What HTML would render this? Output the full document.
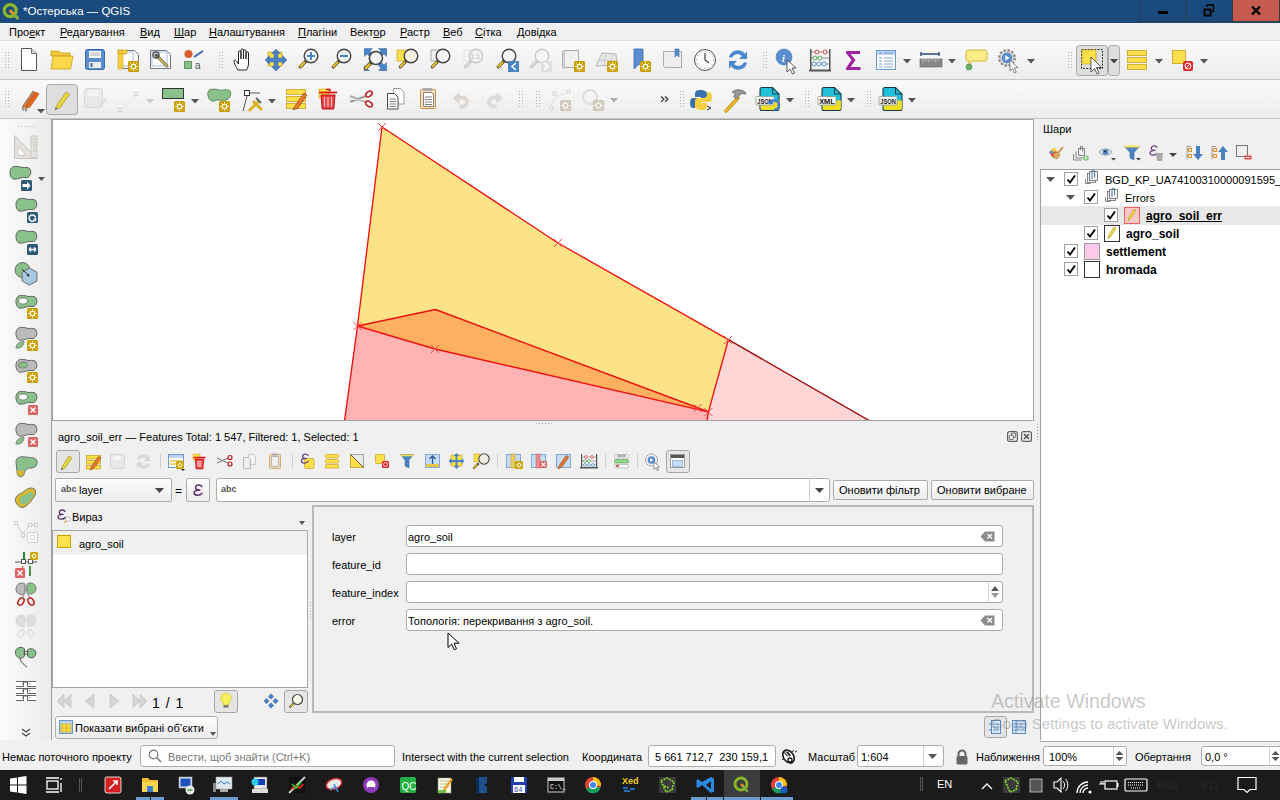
<!DOCTYPE html>
<html><head><meta charset="utf-8">
<style>
*{box-sizing:border-box}
html,body{margin:0;padding:0}
body{width:1280px;height:800px;overflow:hidden;position:relative;background:#f0f0f0;font-family:"Liberation Sans",sans-serif;font-size:11px;color:#000;line-height:1}
.a{position:absolute}
.t{position:absolute;white-space:nowrap;line-height:1}
svg{position:absolute;overflow:visible}
#title{left:0;top:0;width:1280px;height:23px;background:#1b4a7e;color:#fff}
#menu{left:0;top:23px;width:1280px;height:18px;background:#f0f0f0;border-bottom:1px solid #dcdcdc}
.tb{left:0;width:1280px;height:39px;background:linear-gradient(#fafafa,#ececec);border-bottom:1px solid #c8c8c8}
#lefttb{left:0;top:119px;width:52px;height:621px;background:#f0f0f0;border-right:1px solid #a8a8a8}
#map{left:52px;top:119px;width:982px;height:302px;background:#fff;border:1px solid #a0a0a0;overflow:hidden}
#map svg{overflow:hidden}
#dock{left:52px;top:421px;width:983px;height:319px;background:#f0f0f0}
#layers{left:1035px;top:119px;width:245px;height:621px;background:#f0f0f0}
#status{left:0;top:740px;width:1280px;height:30px;background:#f0f0f0}
#taskbar{left:0;top:770px;width:1280px;height:30px;background:#1b1b1b}
.field{position:absolute;background:#fff;border:1px solid #adadad;border-radius:2px}
.btn{position:absolute;background:linear-gradient(#fdfdfd,#ececec);border:1px solid #adadad;border-radius:2px}
.chk{position:absolute;background:#e5e5e5;border:1px solid #a8a8a8;border-radius:3px}
.cb{position:absolute;width:14px;height:14px;background:#fff;border:1px solid #a0a0a0}
.u{text-decoration:underline}
</style></head><body>
<div id="title" class="a">
<svg width="18" height="18" style="left:2px;top:2px" viewBox="0 0 18 18"><circle cx="8.2" cy="8.6" r="6" fill="none" stroke="#8bb92a" stroke-width="3.2"/><path d="M9,9.5L15.5,16" stroke="#7cb342" stroke-width="3.2" stroke-linecap="round"/><path d="M8.5,9L11,11.5" stroke="#f08a2a" stroke-width="2.6" stroke-linecap="round"/></svg>
<div class="t" style="left:23px;top:6px;font-size:11.5px;color:#fff">*Остерська — QGIS</div>
<div class="a" style="left:1139px;top:0;width:47px;height:22px;border-left:1px solid #2e3a48;border-bottom:1px solid #2e3a48"></div>
<div class="a" style="left:1186px;top:0;width:46px;height:22px;border-left:1px solid #2e3a48;border-bottom:1px solid #2e3a48"></div>
<div class="a" style="left:1232px;top:0;width:48px;height:22px;background:#c55a4f;border-left:1px solid #3a3a3a;border-bottom:1px solid #3a3a3a;border-right:1px solid #3a3a3a"></div>
<div class="a" style="left:1158px;top:11px;width:10px;height:3px;background:#000"></div>
<svg width="12" height="12" style="left:1203px;top:4px" viewBox="0 0 12 12"><path d="M1.5,5.5h6v6h-6z" fill="none" stroke="#000" stroke-width="2"/><path d="M4,3V1h6.5v6.5H8.5" fill="none" stroke="#000" stroke-width="1.4"/></svg>
<svg width="12" height="12" style="left:1250px;top:4px" viewBox="0 0 12 12"><path d="M2,2.5L10,10.5M10,2.5L2,10.5" stroke="#000" stroke-width="2.4"/></svg>
</div>
<div id="menu" class="a">
<div class="t" style="left:9px;top:4px">Про<span class="u">е</span>кт</div>
<div class="t" style="left:60px;top:4px"><span class="u">Р</span>едагування</div>
<div class="t" style="left:140px;top:4px"><span class="u">В</span>ид</div>
<div class="t" style="left:174px;top:4px"><span class="u">Ш</span>ар</div>
<div class="t" style="left:209px;top:4px"><span class="u">Н</span>алаштування</div>
<div class="t" style="left:298px;top:4px"><span class="u">П</span>лагіни</div>
<div class="t" style="left:350px;top:4px">Вект<span class="u">о</span>р</div>
<div class="t" style="left:400px;top:4px"><span class="u">Р</span>астр</div>
<div class="t" style="left:443px;top:4px"><span class="u">В</span>еб</div>
<div class="t" style="left:475px;top:4px"><span class="u">С</span>ітка</div>
<div class="t" style="left:517px;top:4px"><span class="u">Д</span>овідка</div>
</div>
<div id="tb1" class="a tb" style="top:41px"></div>
<div id="tb2" class="a tb" style="top:80px"></div>
<svg width="1280" height="78" style="left:0;top:41px" viewBox="0 41 1280 78"><rect x="5" y="52" width="1" height="1" fill="#b0b0b0"/><rect x="8" y="52" width="1" height="1" fill="#b0b0b0"/><rect x="5" y="55" width="1" height="1" fill="#b0b0b0"/><rect x="8" y="55" width="1" height="1" fill="#b0b0b0"/><rect x="5" y="58" width="1" height="1" fill="#b0b0b0"/><rect x="8" y="58" width="1" height="1" fill="#b0b0b0"/><rect x="5" y="61" width="1" height="1" fill="#b0b0b0"/><rect x="8" y="61" width="1" height="1" fill="#b0b0b0"/><rect x="5" y="64" width="1" height="1" fill="#b0b0b0"/><rect x="8" y="64" width="1" height="1" fill="#b0b0b0"/><rect x="5" y="67" width="1" height="1" fill="#b0b0b0"/><rect x="8" y="67" width="1" height="1" fill="#b0b0b0"/>
<path d="M21.5,48.5h10l5,5v17h-15z" fill="#fff" stroke="#555" stroke-width="1"/><path d="M31.5,48.5v5h5" fill="#ddd" stroke="#555" stroke-width="0.8"/>
<path d="M51,51h8l2,2h9v3h-19z" fill="#f0c838" stroke="#c8a020" stroke-width="0.8"/><path d="M53,56h20l-2.5,13h-19.5z" fill="#fcd84a" stroke="#c8a020" stroke-width="0.8"/>
<rect x="85.5" y="49.5" width="19" height="20" rx="2" fill="#5a8ed0" stroke="#3a6aa8"/><rect x="89" y="51" width="12" height="7" fill="#fff"/><path d="M90,53h10M90,55h10" stroke="#888" stroke-width="0.7"/><rect x="89" y="62" width="12" height="6" fill="#eee"/><rect x="90.5" y="63" width="2" height="4" fill="#3a6aa8"/>
<path d="M118.5,50.5h16l4,4v14h-20z" fill="#fff" stroke="#666" stroke-width="0.9"/><rect x="120" y="52" width="13" height="14" fill="none" stroke="#8ab0e0" stroke-width="0.8"/><path d="M118,50h5v19h-5z M118,50h9v4h-9z" fill="#f4d040" stroke="#c8a020" stroke-width="0.6"/><rect x="128" y="61" width="11" height="11" rx="1.5" fill="#c9a000"/><circle cx="133.5" cy="66.5" r="2.20" fill="none" stroke="#fff" stroke-width="1.10"/><path d="M136.36,66.50L137.90,66.50M135.52,68.52L136.61,69.61M133.50,69.36L133.50,70.90M131.48,68.52L130.39,69.61M130.64,66.50L129.10,66.50M131.48,64.48L130.39,63.39M133.50,63.64L133.50,62.10M135.52,64.48L136.61,63.39" stroke="#fff" stroke-width="0.99"/>
<path d="M150.5,50.5h16l4,4v14h-20z" fill="#fff" stroke="#666" stroke-width="0.9"/><rect x="152" y="52" width="15" height="14" fill="none" stroke="#8ab0e0" stroke-width="0.8"/><path d="M156,55l11,11" stroke="#555" stroke-width="3" stroke-linecap="round"/><path d="M158,57l9,9" stroke="#e8c040" stroke-width="1.6" stroke-linecap="round"/><circle cx="156" cy="55" r="3" fill="none" stroke="#555" stroke-width="1.5"/>
<circle cx="188.5" cy="54" r="4" fill="#d86030"/><path d="M194,57l9,-6" stroke="#3a6ab8" stroke-width="2"/><rect x="184.5" y="61.5" width="7" height="7" fill="#8ac08a" stroke="#4a8a4a" stroke-width="0.8"/><text x="195" y="69" font-size="10" fill="#555" font-family="Liberation Sans">a</text>
<rect x="219" y="52" width="1" height="1" fill="#b0b0b0"/><rect x="222" y="52" width="1" height="1" fill="#b0b0b0"/><rect x="219" y="55" width="1" height="1" fill="#b0b0b0"/><rect x="222" y="55" width="1" height="1" fill="#b0b0b0"/><rect x="219" y="58" width="1" height="1" fill="#b0b0b0"/><rect x="222" y="58" width="1" height="1" fill="#b0b0b0"/><rect x="219" y="61" width="1" height="1" fill="#b0b0b0"/><rect x="222" y="61" width="1" height="1" fill="#b0b0b0"/><rect x="219" y="64" width="1" height="1" fill="#b0b0b0"/><rect x="222" y="64" width="1" height="1" fill="#b0b0b0"/><rect x="219" y="67" width="1" height="1" fill="#b0b0b0"/><rect x="222" y="67" width="1" height="1" fill="#b0b0b0"/>
<path d="M238,70c-2,-3 -4,-7 -4,-9c0,-1 1.5,-1.5 2.5,0l2,3v-12c0,-1.5 2.5,-1.5 2.5,0v7v-9c0,-1.5 2.5,-1.5 2.5,0v9v-8c0,-1.5 2.5,-1.5 2.5,0v8v-6c0,-1.5 2.5,-1.5 2.5,0v10c0,3 -1,5 -2,7z" fill="#fff" stroke="#222" stroke-width="1"/>
<rect x="268" y="52" width="14" height="14" fill="#fce04a" stroke="#c8a020" stroke-width="0.7"/><g fill="#4a84c4" stroke="#3a6aa4" stroke-width="0.5"><path d="M276,49l4.5,4.5h-9z M276,71l4.5,-4.5h-9z M265,60l4.5,4.5v-9z M287,60l-4.5,4.5v-9z"/><rect x="274" y="53" width="4" height="14"/><rect x="269" y="58" width="14" height="4"/></g>
<path d="M306.24,60.76l-6,6" stroke="#444" stroke-width="3.2" stroke-linecap="round"/><path d="M304.44,62.559999999999995l-4,4" stroke="#e8c020" stroke-width="2.2" stroke-linecap="round"/><circle cx="311" cy="56" r="6.8" fill="#f4f4f4" stroke="#444" stroke-width="1.4"/><path d="M307,56h8M311,52v8" stroke="#4a84c4" stroke-width="2"/>
<path d="M339.24,60.76l-6,6" stroke="#444" stroke-width="3.2" stroke-linecap="round"/><path d="M337.44,62.559999999999995l-4,4" stroke="#e8c020" stroke-width="2.2" stroke-linecap="round"/><circle cx="344" cy="56" r="6.8" fill="#f4f4f4" stroke="#444" stroke-width="1.4"/><path d="M340,56h8" stroke="#4a84c4" stroke-width="2"/>
<g fill="#4a84c4" stroke="#3a6aa4" stroke-width="0.5"><path d="M364.5,48.5h8l-2.5,2.5 3.5,3.5 -3,3 -3.5,-3.5 -2.5,2.5z M386.5,48.5h-8l2.5,2.5 -3.5,3.5 3,3 3.5,-3.5 2.5,2.5z M386.5,70.5h-8l2.5,-2.5 -3.5,-3.5 3,-3 3.5,3.5 2.5,-2.5z"/></g><path d="M371.16,62.34l-6,6" stroke="#444" stroke-width="3.2" stroke-linecap="round"/><path d="M369.36,64.14l-4,4" stroke="#e8c020" stroke-width="2.2" stroke-linecap="round"/><circle cx="375.5" cy="58" r="6.2" fill="#e8e8e8" stroke="#444" stroke-width="1.4"/>
<g fill="#4a84c4"><path d="M364,49h6l-6,6z M387,49h-6l6,6z M364,71h6l-6,-6z M387,71h-6l6,-6z"/></g><path d="M371.45,62.55l-6,6" stroke="#444" stroke-width="3.2" stroke-linecap="round"/><path d="M369.65,64.35l-4,4" stroke="#e8c020" stroke-width="2.2" stroke-linecap="round"/><circle cx="376" cy="58" r="6.5" fill="#f4f4f4" stroke="#444" stroke-width="1.4"/>
<rect x="397" y="50" width="9" height="11" fill="#fce04a" stroke="#c8a020" stroke-width="0.7"/><path d="M406.24,60.76l-6,6" stroke="#444" stroke-width="3.2" stroke-linecap="round"/><path d="M404.44,62.559999999999995l-4,4" stroke="#e8c020" stroke-width="2.2" stroke-linecap="round"/><circle cx="411" cy="56" r="6.8" fill="#f0eee0" stroke="#444" stroke-width="1.4"/>
<rect x="431" y="50" width="9" height="11" fill="#eee" stroke="#888" stroke-width="0.7"/><path d="M438.24,60.76l-6,6" stroke="#444" stroke-width="3.2" stroke-linecap="round"/><path d="M436.44,62.559999999999995l-4,4" stroke="#e8c020" stroke-width="2.2" stroke-linecap="round"/><circle cx="443" cy="56" r="6.8" fill="#f4f4f4" stroke="#444" stroke-width="1.4"/>
<rect x="464" y="50" width="9" height="11" fill="#f4f4f4" stroke="#ddd" stroke-width="0.7"/><path d="M471.24,60.76l-6,6" stroke="#c8c8c8" stroke-width="3.2" stroke-linecap="round"/><path d="M469.44,62.559999999999995l-4,4" stroke="#d8d8d0" stroke-width="2.2" stroke-linecap="round"/><circle cx="476" cy="56" r="6.8" fill="#f4f4f4" stroke="#c8c8c8" stroke-width="1.4"/><text x="470" y="59" font-size="7" font-weight="bold" fill="#c8c8c8" font-family="Liberation Sans">1:1</text>
<path d="M504.24,60.76l-6,6" stroke="#444" stroke-width="3.2" stroke-linecap="round"/><path d="M502.44,62.559999999999995l-4,4" stroke="#e8c020" stroke-width="2.2" stroke-linecap="round"/><circle cx="509" cy="56" r="6.8" fill="#f4f4f4" stroke="#444" stroke-width="1.4"/><rect x="508" y="61" width="11" height="11" fill="#4a84c4"/><path d="M516,63l-4,3.5 4,3.5" stroke="#fff" stroke-width="1.6" fill="none"/>
<path d="M537.24,60.76l-6,6" stroke="#c8c8c8" stroke-width="3.2" stroke-linecap="round"/><path d="M535.44,62.559999999999995l-4,4" stroke="#d8d8d0" stroke-width="2.2" stroke-linecap="round"/><circle cx="542" cy="56" r="6.8" fill="#f4f4f4" stroke="#c8c8c8" stroke-width="1.4"/><rect x="541" y="61" width="11" height="11" fill="#e0e0e0"/><path d="M544,63l4,3.5 -4,3.5" stroke="#fff" stroke-width="1.6" fill="none"/>
<path d="M564.5,50.5h14v17h-14z" fill="#f0f0f0" stroke="#999" stroke-width="0.8"/><path d="M564.5,50.5c-1,0 -2,1 -2,2v14c0,1 1,2 2,2" fill="#ddd" stroke="#999" stroke-width="0.8"/><rect x="574" y="61" width="11" height="11" rx="1.5" fill="#c9a000"/><circle cx="579.5" cy="66.5" r="2.20" fill="none" stroke="#fff" stroke-width="1.10"/><path d="M582.36,66.50L583.90,66.50M581.52,68.52L582.61,69.61M579.50,69.36L579.50,70.90M577.48,68.52L576.39,69.61M576.64,66.50L575.10,66.50M577.48,64.48L576.39,63.39M579.50,63.64L579.50,62.10M581.52,64.48L582.61,63.39" stroke="#fff" stroke-width="0.99"/>
<path d="M596,66l6,-13 14,1 1,11z" fill="#e8e8e8" stroke="#aaa" stroke-width="0.8"/><path d="M600,60l16,1M606,54l-2,12M612,54l-1,12" stroke="#bbb" stroke-width="0.6"/><rect x="607" y="61" width="11" height="11" rx="1.5" fill="#c9a000"/><circle cx="612.5" cy="66.5" r="2.20" fill="none" stroke="#fff" stroke-width="1.10"/><path d="M615.36,66.50L616.90,66.50M614.52,68.52L615.61,69.61M612.50,69.36L612.50,70.90M610.48,68.52L609.39,69.61M609.64,66.50L608.10,66.50M610.48,64.48L609.39,63.39M612.50,63.64L612.50,62.10M614.52,64.48L615.61,63.39" stroke="#fff" stroke-width="0.99"/>
<path d="M634,49h9v18l-4,-3 -5,5z" fill="#5a8ed0" stroke="#3a6aa8" stroke-width="0.8"/><rect x="640" y="61" width="11" height="11" rx="1.5" fill="#c9a000"/><circle cx="645.5" cy="66.5" r="2.20" fill="none" stroke="#fff" stroke-width="1.10"/><path d="M648.36,66.50L649.90,66.50M647.52,68.52L648.61,69.61M645.50,69.36L645.50,70.90M643.48,68.52L642.39,69.61M642.64,66.50L641.10,66.50M643.48,64.48L642.39,63.39M645.50,63.64L645.50,62.10M647.52,64.48L648.61,63.39" stroke="#fff" stroke-width="0.99"/>
<path d="M663.5,51.5h18v16h-16c-1,0 -2,-1 -2,-2z" fill="#eee" stroke="#999" stroke-width="0.8"/><path d="M675,49h4v8l-2,-2 -2,2z" fill="#5a8ed0" stroke="#3a6aa8" stroke-width="0.6"/>
<circle cx="705" cy="60" r="10.5" fill="#fafafa" stroke="#555" stroke-width="1"/><circle cx="705" cy="60" r="8.5" fill="none" stroke="#4a84c4" stroke-width="0.9" stroke-dasharray="1 3.4"/><path d="M705,53v7l4,3" stroke="#444" stroke-width="1.2" fill="none"/>
<path d="M729,57a9,9 0 0 1 16,-3l2,-3v8h-8l3,-3a6,6 0 0 0 -10,2z" fill="#4a88d0"/><path d="M747,63a9,9 0 0 1 -16,3l-2,3v-8h8l-3,3a6,6 0 0 0 10,-2z" fill="#4a88d0"/>
<rect x="763" y="52" width="1" height="1" fill="#b0b0b0"/><rect x="766" y="52" width="1" height="1" fill="#b0b0b0"/><rect x="763" y="55" width="1" height="1" fill="#b0b0b0"/><rect x="766" y="55" width="1" height="1" fill="#b0b0b0"/><rect x="763" y="58" width="1" height="1" fill="#b0b0b0"/><rect x="766" y="58" width="1" height="1" fill="#b0b0b0"/><rect x="763" y="61" width="1" height="1" fill="#b0b0b0"/><rect x="766" y="61" width="1" height="1" fill="#b0b0b0"/><rect x="763" y="64" width="1" height="1" fill="#b0b0b0"/><rect x="766" y="64" width="1" height="1" fill="#b0b0b0"/><rect x="763" y="67" width="1" height="1" fill="#b0b0b0"/><rect x="766" y="67" width="1" height="1" fill="#b0b0b0"/>
<circle cx="784" cy="57" r="8" fill="#5a8ed0" stroke="#4a7ab8" stroke-width="0.6"/><text x="782" y="62" font-size="10" font-style="italic" font-weight="bold" fill="#fff" font-family="Liberation Serif">i</text><path d="M787,60v12l3,-3 2.5,5 2,-1 -2.5,-5h4z" fill="#fff" stroke="#333" stroke-width="0.8"/>
<rect x="810" y="49" width="1.5" height="22" fill="#555"/><rect x="829" y="49" width="1.5" height="22" fill="#555"/><rect x="809" y="69.5" width="22" height="2" fill="#555"/><path d="M811,52h18M811,58h18M811,64h18" stroke="#777" stroke-width="0.8"/><g stroke-width="0.9"><circle cx="817" cy="52" r="2" fill="#fff" stroke="#d03030"/><circle cx="825" cy="52" r="2" fill="#fff" stroke="#d03030"/><circle cx="815" cy="58" r="2" fill="#fff" stroke="#40a040"/><circle cx="820" cy="58" r="2" fill="#fff" stroke="#40a040"/><circle cx="814" cy="64" r="2" fill="#fff" stroke="#4a84c4"/><circle cx="819" cy="64" r="2" fill="#fff" stroke="#4a84c4"/><circle cx="824" cy="64" r="2" fill="#fff" stroke="#4a84c4"/></g>
<path d="M846,51h14v3h-9.5l5,6 -5,7h10v3h-14.5v-2l5.5,-8 -5.5,-7z" fill="#a020a0"/>
<rect x="876.5" y="50.5" width="19" height="19" fill="#fff" stroke="#6a9ad4"/><rect x="877" y="51" width="18" height="4" fill="#c0d4f0"/><path d="M879,53h3M884,53h9" stroke="#6a9ad4" stroke-width="1"/><path d="M879,58h3M884,58h9M879,61h3M884,61h9M879,64h3M884,64h9M879,67h3M884,67h9" stroke="#6a9ad4" stroke-width="0.9"/>
<path d="M903,59h8l-4,4.5z" fill="#555"/>
<path d="M921,54h18M921,52v4M939,52v4" stroke="#2a4a78" stroke-width="1.4"/><rect x="920" y="59" width="22" height="8" fill="#888" stroke="#666" stroke-width="0.6"/><path d="M923,59v3M926,59v2M929,59v3M932,59v2M935,59v3M938,59v2" stroke="#ddd" stroke-width="0.8"/>
<path d="M948,59h8l-4,4.5z" fill="#555"/>
<path d="M966,52a2,2 0 0 1 2,-2h17a2,2 0 0 1 2,2v7a2,2 0 0 1 -2,2h-13l-3,4 0,-4h-1a2,2 0 0 1 -2,-2z" fill="#fcec8a" stroke="#d0b020" stroke-width="0.9"/><circle cx="969" cy="67" r="3" fill="#6ab06a" stroke="#4a804a" stroke-width="0.6"/>
<circle cx="1007" cy="58" r="7.6" fill="#e4e4e4" stroke="#888" stroke-width="2.6" stroke-dasharray="2.4 1.6"/><circle cx="1007" cy="58" r="6.8" fill="#e8e8e8" stroke="#aaa" stroke-width="0.6"/><circle cx="1007" cy="58" r="5" fill="#5a8ed0" stroke="#3a6aa8" stroke-width="0.6"/><path d="M1005.3,55.3v5.4l4.4,-2.7z" fill="#fff"/><path d="M1010,60v11l2.5,-2.5 2,4.5 1.8,-0.8 -2,-4.5h3.7z" fill="#fff" stroke="#555" stroke-width="0.7"/>
<path d="M1027,59h8l-4,4.5z" fill="#555"/>
<rect x="1068" y="52" width="1" height="1" fill="#b0b0b0"/><rect x="1071" y="52" width="1" height="1" fill="#b0b0b0"/><rect x="1068" y="55" width="1" height="1" fill="#b0b0b0"/><rect x="1071" y="55" width="1" height="1" fill="#b0b0b0"/><rect x="1068" y="58" width="1" height="1" fill="#b0b0b0"/><rect x="1071" y="58" width="1" height="1" fill="#b0b0b0"/><rect x="1068" y="61" width="1" height="1" fill="#b0b0b0"/><rect x="1071" y="61" width="1" height="1" fill="#b0b0b0"/><rect x="1068" y="64" width="1" height="1" fill="#b0b0b0"/><rect x="1071" y="64" width="1" height="1" fill="#b0b0b0"/><rect x="1068" y="67" width="1" height="1" fill="#b0b0b0"/><rect x="1071" y="67" width="1" height="1" fill="#b0b0b0"/>
<rect x="1076.5" y="45.5" width="31" height="30" rx="3" fill="#dedede" stroke="#a8a8a8"/><rect x="1108.5" y="45.5" width="11" height="30" rx="3" fill="#dedede" stroke="#a8a8a8"/>
<rect x="1081.5" y="49.5" width="21" height="19" fill="none" stroke="#222" stroke-dasharray="1.8 1.4"/><rect x="1082" y="50" width="14" height="14" fill="#fce04a" stroke="#c8a020" stroke-width="0.7"/><path d="M1091,57v15l3.5,-3.5 2.5,5.5 2,-1 -2.5,-5.5h5z" fill="#fff" stroke="#333" stroke-width="0.8"/>
<path d="M1110,59h8l-4,4.5z" fill="#444"/>
<g fill="#fce04a" stroke="#c8a020" stroke-width="0.8"><rect x="1127.5" y="50.5" width="19" height="5"/><rect x="1127.5" y="57.5" width="19" height="5"/><rect x="1127.5" y="64.5" width="19" height="5"/></g>
<path d="M1155,59h8l-4,4.5z" fill="#555"/>
<rect x="1172.5" y="50.5" width="13" height="13" fill="#fce04a" stroke="#c8a020" stroke-width="0.8"/><rect x="1183" y="61" width="10" height="10" rx="2" fill="#e02828"/><circle cx="1188" cy="66" r="3" fill="none" stroke="#fff" stroke-width="1"/><path d="M1186,68l4,-4" stroke="#fff" stroke-width="1"/>
<path d="M1200,59h8l-4,4.5z" fill="#555"/>
<rect x="5" y="91" width="1" height="1" fill="#b0b0b0"/><rect x="8" y="91" width="1" height="1" fill="#b0b0b0"/><rect x="5" y="94" width="1" height="1" fill="#b0b0b0"/><rect x="8" y="94" width="1" height="1" fill="#b0b0b0"/><rect x="5" y="97" width="1" height="1" fill="#b0b0b0"/><rect x="8" y="97" width="1" height="1" fill="#b0b0b0"/><rect x="5" y="100" width="1" height="1" fill="#b0b0b0"/><rect x="8" y="100" width="1" height="1" fill="#b0b0b0"/><rect x="5" y="103" width="1" height="1" fill="#b0b0b0"/><rect x="8" y="103" width="1" height="1" fill="#b0b0b0"/><rect x="5" y="106" width="1" height="1" fill="#b0b0b0"/><rect x="8" y="106" width="1" height="1" fill="#b0b0b0"/>
<path d="M22,108l2,-4 9,-13 3,2 -9,13z" fill="#c87a4a" stroke="#8a5030" stroke-width="0.6"/><path d="M25,109l2,-4 9,-13 3,2 -9,13z" fill="#e86a20" stroke="#a04a10" stroke-width="0.6"/><path d="M22,108l1,3 2,-2z M25,109l0.5,3 2,-2z" fill="#777"/>
<path d="M37,109h8l-4,4.5z" fill="#555"/>
<rect x="46.5" y="84.5" width="31" height="30" rx="3" fill="#dedede" stroke="#a8a8a8"/><path d="M55,110l2,-5 9,-13 3.5,2.2 -9,13z" fill="#e8d840" stroke="#a89020" stroke-width="0.7"/><path d="M55,110l0.5,-3 2.5,1.6z" fill="#777"/>
<rect x="84.5" y="88.5" width="18" height="19" rx="2" fill="#e8e8e8" stroke="#d8d8d8"/><rect x="88" y="90" width="11" height="6" fill="#f4f4f4"/><path d="M97,110l2,-4 6,-8 2,1.5 -6,8z" fill="#e0e0e0"/>
<path d="M120,111l16,-16" stroke="#d8d8d8" stroke-width="1" stroke-dasharray="2 2"/><rect x="118.5" y="108.5" width="3" height="3" fill="#fff" stroke="#d0d0d0"/><rect x="134.5" y="92.5" width="3" height="3" fill="#fff" stroke="#d0d0d0"/>
<path d="M146,99h8l-4,4.5z" fill="#c8c8c8"/>
<rect x="162.5" y="88.5" width="21" height="10" fill="#8ac08a" stroke="#333" stroke-width="1"/><rect x="174" y="101" width="11" height="11" rx="1.5" fill="#c9a000"/><circle cx="179.5" cy="106.5" r="2.20" fill="none" stroke="#fff" stroke-width="1.10"/><path d="M182.36,106.50L183.90,106.50M181.52,108.52L182.61,109.61M179.50,109.36L179.50,110.90M177.48,108.52L176.39,109.61M176.64,106.50L175.10,106.50M177.48,104.48L176.39,103.39M179.50,103.64L179.50,102.10M181.52,104.48L182.61,103.39" stroke="#fff" stroke-width="0.99"/>
<path d="M191,99h8l-4,4.5z" fill="#555"/>
<path d="M208,92c1,-4 8,-3 11,-2c3,1 9,-2 11,1c2,3 0,8 -4,9c-5,1 -8,-1 -12,1c-4,1 -7,-4 -6,-9z" fill="#8ac08a" stroke="#4a7a4a" stroke-width="0.8"/><rect x="219" y="101" width="11" height="11" rx="1.5" fill="#c9a000"/><circle cx="224.5" cy="106.5" r="2.20" fill="none" stroke="#fff" stroke-width="1.10"/><path d="M227.36,106.50L228.90,106.50M226.52,108.52L227.61,109.61M224.50,109.36L224.50,110.90M222.48,108.52L221.39,109.61M221.64,106.50L220.10,106.50M222.48,104.48L221.39,103.39M224.50,103.64L224.50,102.10M226.52,104.48L227.61,103.39" stroke="#fff" stroke-width="0.99"/>
<rect x="244.5" y="90.5" width="5" height="5" fill="#fff" stroke="#333"/><path d="M250,93h10M247,96l-4,15" stroke="#555" stroke-width="1"/><path d="M249,111l10,-10M253,101l9,9" stroke="#d8b020" stroke-width="2.8"/><path d="M256,98l5,5" stroke="#666" stroke-width="2"/>
<path d="M268,99h8l-4,4.5z" fill="#555"/>
<g fill="#fce04a" stroke="#c8a020" stroke-width="0.8"><rect x="286.5" y="89.5" width="19" height="5"/><rect x="286.5" y="96.5" width="19" height="5"/><rect x="286.5" y="103.5" width="19" height="5"/></g><path d="M293,110l2,-4 9,-13 3,2 -9,13z" fill="#e87830" stroke="#8a4010" stroke-width="0.7"/>
<rect x="319" y="89" width="10" height="9" fill="#fce04a" stroke="#c8a020" stroke-width="0.6"/><path d="M326,89.5h4v2" stroke="#d81818" stroke-width="1.4" fill="none"/><path d="M319,92.5h18" stroke="#d81818" stroke-width="1.8"/><path d="M321,95h14l-1.2,14h-11.6z" fill="#e84040" stroke="#c01010" stroke-width="1"/><path d="M324.5,97v10M328,97v10M331.5,97v10" stroke="#fbb" stroke-width="1.3"/>
<path d="M351,96.5l14,5M351,101.5l14,-5" stroke="#999" stroke-width="2" stroke-linecap="round"/><path d="M351,96.5l14,5" stroke="#ddd" stroke-width="0.7"/><ellipse cx="369" cy="94" rx="3.6" ry="2.4" transform="rotate(-35 369 94)" fill="none" stroke="#b82020" stroke-width="1.5"/><ellipse cx="369" cy="104" rx="3.6" ry="2.4" transform="rotate(35 369 104)" fill="none" stroke="#b82020" stroke-width="1.5"/>
<path d="M393.5,88.5h7l3.5,3.5v12h-10.5z" fill="#fff" stroke="#888" stroke-width="0.8"/><path d="M387.5,93.5h7l3.5,3.5v12h-10.5z" fill="#fff" stroke="#333" stroke-width="0.9"/><path d="M389.5,99h6.5M389.5,101.5h6.5M389.5,104h6.5M389.5,106.5h6.5" stroke="#444" stroke-width="0.7"/>
<rect x="420.5" y="89.5" width="15" height="19" rx="1" fill="#f4e0c0" stroke="#c89040" stroke-width="1"/><rect x="423" y="88" width="9" height="3" fill="#aaa"/><path d="M423.5,92.5h8l2,2v12h-10z" fill="#fff" stroke="#555" stroke-width="0.7"/><path d="M425,97h7M425,99.5h7M425,102h7M425,104.5h7" stroke="#444" stroke-width="0.7"/>
<path d="M453,98l6.5,-6v3.5h3a6.5,6.5 0 0 1 0,13h-3v-4h3a2.5,2.5 0 0 0 0,-5h-3v4.5z" fill="#dcd6d2"/>
<path d="M503,98l-6.5,-6v3.5h-3a6.5,6.5 0 0 0 0,13h3v-4h-3a2.5,2.5 0 0 1 0,-5h3v4.5z" fill="#d8dcd8"/>
<rect x="519" y="91" width="1" height="1" fill="#b0b0b0"/><rect x="522" y="91" width="1" height="1" fill="#b0b0b0"/><rect x="519" y="94" width="1" height="1" fill="#b0b0b0"/><rect x="522" y="94" width="1" height="1" fill="#b0b0b0"/><rect x="519" y="97" width="1" height="1" fill="#b0b0b0"/><rect x="522" y="97" width="1" height="1" fill="#b0b0b0"/><rect x="519" y="100" width="1" height="1" fill="#b0b0b0"/><rect x="522" y="100" width="1" height="1" fill="#b0b0b0"/><rect x="519" y="103" width="1" height="1" fill="#b0b0b0"/><rect x="522" y="103" width="1" height="1" fill="#b0b0b0"/><rect x="519" y="106" width="1" height="1" fill="#b0b0b0"/><rect x="522" y="106" width="1" height="1" fill="#b0b0b0"/>
<rect x="536" y="91" width="1" height="1" fill="#b0b0b0"/><rect x="539" y="91" width="1" height="1" fill="#b0b0b0"/><rect x="536" y="94" width="1" height="1" fill="#b0b0b0"/><rect x="539" y="94" width="1" height="1" fill="#b0b0b0"/><rect x="536" y="97" width="1" height="1" fill="#b0b0b0"/><rect x="539" y="97" width="1" height="1" fill="#b0b0b0"/><rect x="536" y="100" width="1" height="1" fill="#b0b0b0"/><rect x="539" y="100" width="1" height="1" fill="#b0b0b0"/><rect x="536" y="103" width="1" height="1" fill="#b0b0b0"/><rect x="539" y="103" width="1" height="1" fill="#b0b0b0"/><rect x="536" y="106" width="1" height="1" fill="#b0b0b0"/><rect x="539" y="106" width="1" height="1" fill="#b0b0b0"/>
<path d="M551,110c0,-9 5,-16 14,-16" stroke="#ddd" stroke-width="1" fill="none"/><rect x="550" y="107" width="3" height="3" fill="#fff" stroke="#d0d0d0"/><rect x="553" y="92" width="3" height="3" fill="#fff" stroke="#d0d0d0"/><rect x="567" y="90" width="3" height="3" fill="#fff" stroke="#d0d0d0"/><rect x="560" y="100" width="11" height="11" rx="1.5" fill="#cfc8b8"/><circle cx="565.5" cy="105.5" r="2.20" fill="none" stroke="#fff" stroke-width="1.10"/><path d="M568.36,105.50L569.90,105.50M567.52,107.52L568.61,108.61M565.50,108.36L565.50,109.90M563.48,107.52L562.39,108.61M562.64,105.50L561.10,105.50M563.48,103.48L562.39,102.39M565.50,102.64L565.50,101.10M567.52,103.48L568.61,102.39" stroke="#fff" stroke-width="0.99"/>
<circle cx="590" cy="97" r="7" fill="none" stroke="#ddd" stroke-width="2"/><rect x="593" y="100" width="11" height="11" rx="1.5" fill="#cfc8b8"/><circle cx="598.5" cy="105.5" r="2.20" fill="none" stroke="#fff" stroke-width="1.10"/><path d="M601.36,105.50L602.90,105.50M600.52,107.52L601.61,108.61M598.50,108.36L598.50,109.90M596.48,107.52L595.39,108.61M595.64,105.50L594.10,105.50M596.48,103.48L595.39,102.39M598.50,102.64L598.50,101.10M600.52,103.48L601.61,102.39" stroke="#fff" stroke-width="0.99"/>
<path d="M610,98h8l-4,4.5z" fill="#aaa"/>
<path d="M661,96.5l3,2.7 -3,2.7M665,96.5l3,2.7 -3,2.7" stroke="#333" stroke-width="1.2" fill="none"/>
<rect x="680" y="91" width="1" height="1" fill="#b0b0b0"/><rect x="683" y="91" width="1" height="1" fill="#b0b0b0"/><rect x="680" y="94" width="1" height="1" fill="#b0b0b0"/><rect x="683" y="94" width="1" height="1" fill="#b0b0b0"/><rect x="680" y="97" width="1" height="1" fill="#b0b0b0"/><rect x="683" y="97" width="1" height="1" fill="#b0b0b0"/><rect x="680" y="100" width="1" height="1" fill="#b0b0b0"/><rect x="683" y="100" width="1" height="1" fill="#b0b0b0"/><rect x="680" y="103" width="1" height="1" fill="#b0b0b0"/><rect x="683" y="103" width="1" height="1" fill="#b0b0b0"/><rect x="680" y="106" width="1" height="1" fill="#b0b0b0"/><rect x="683" y="106" width="1" height="1" fill="#b0b0b0"/>
<path d="M700,90c-4,0 -5,2 -5,4v3h6v1h-8c-2,0 -3,2 -3,5s1,5 3,5h2v-3c0,-2 2,-3 4,-3h5c2,0 3,-1 3,-3v-5c0,-2 -2,-4 -7,-4z" fill="#3a72b0"/><path d="M702,110c4,0 5,-2 5,-4v-3h-6v-1h8c2,0 3,-2 3,-5s-1,-5 -3,-5h-2v3c0,2 -2,3 -4,3h-5c-2,0 -3,1 -3,3v5c0,2 2,4 7,4z" fill="#f4d040"/><path d="M707,106l4,2 -4,2" stroke="#333" stroke-width="1" fill="none"/>
<path d="M726,111l12,-13" stroke="#c89010" stroke-width="3.4" stroke-linecap="round"/><path d="M726,111l12,-13" stroke="#f0c030" stroke-width="1.8" stroke-linecap="round"/><path d="M732,92c4,-3 9,-3 13,0l1,2 -4,-0.5 -2,1 -3.5,4.5 -3,-2.5 2,-3z" fill="#999" stroke="#555" stroke-width="0.7"/>
<path d="M762,87.5h10.5l6.5,6.5v14.5a2,2 0 0 1 -2,2h-15a2,2 0 0 1 -2,-2v-19a2,2 0 0 1 2,-2z" fill="#22c0d8" stroke="#173c48" stroke-width="1.1"/><path d="M760.6,100.5h18.3v8a1.5,1.5 0 0 1 -1.5,1.5h-15.3a1.5,1.5 0 0 1 -1.5,-1.5z" fill="#f0dc20"/><path d="M772.5,87.5v6.5h6.5" fill="none" stroke="#173c48" stroke-width="1"/><rect x="756" y="96.5" width="18" height="8.5" rx="1" fill="#f8f8f8" stroke="#8a9a9a" stroke-width="0.8"/><text x="757.2" y="103.8" font-size="7.6" font-weight="bold" fill="#111" font-family="Liberation Sans" textLength="15.6" lengthAdjust="spacingAndGlyphs">JSON</text><path d="M770,104a4.5,4.5 0 1 1 4,5.5" stroke="#3a7ad8" stroke-width="2.2" fill="none"/><path d="M767,102l3,3 1,-4z" fill="#3a7ad8"/>
<path d="M786,98h8l-4,4.5z" fill="#555"/>
<rect x="805" y="91" width="1" height="1" fill="#b0b0b0"/><rect x="808" y="91" width="1" height="1" fill="#b0b0b0"/><rect x="805" y="94" width="1" height="1" fill="#b0b0b0"/><rect x="808" y="94" width="1" height="1" fill="#b0b0b0"/><rect x="805" y="97" width="1" height="1" fill="#b0b0b0"/><rect x="808" y="97" width="1" height="1" fill="#b0b0b0"/><rect x="805" y="100" width="1" height="1" fill="#b0b0b0"/><rect x="808" y="100" width="1" height="1" fill="#b0b0b0"/><rect x="805" y="103" width="1" height="1" fill="#b0b0b0"/><rect x="808" y="103" width="1" height="1" fill="#b0b0b0"/><rect x="805" y="106" width="1" height="1" fill="#b0b0b0"/><rect x="808" y="106" width="1" height="1" fill="#b0b0b0"/>
<path d="M824,87.5h10.5l6.5,6.5v14.5a2,2 0 0 1 -2,2h-15a2,2 0 0 1 -2,-2v-19a2,2 0 0 1 2,-2z" fill="#22c0d8" stroke="#173c48" stroke-width="1.1"/><path d="M822.6,100.5h18.3v8a1.5,1.5 0 0 1 -1.5,1.5h-15.3a1.5,1.5 0 0 1 -1.5,-1.5z" fill="#f0dc20"/><path d="M834.5,87.5v6.5h6.5" fill="none" stroke="#173c48" stroke-width="1"/><rect x="818" y="96.5" width="18" height="8.5" rx="1" fill="#f8f8f8" stroke="#8a9a9a" stroke-width="0.8"/><text x="819.2" y="103.8" font-size="7.6" font-weight="bold" fill="#111" font-family="Liberation Sans" textLength="15.6" lengthAdjust="spacingAndGlyphs">XML</text>
<path d="M847,98h8l-4,4.5z" fill="#555"/>
<rect x="867" y="91" width="1" height="1" fill="#b0b0b0"/><rect x="870" y="91" width="1" height="1" fill="#b0b0b0"/><rect x="867" y="94" width="1" height="1" fill="#b0b0b0"/><rect x="870" y="94" width="1" height="1" fill="#b0b0b0"/><rect x="867" y="97" width="1" height="1" fill="#b0b0b0"/><rect x="870" y="97" width="1" height="1" fill="#b0b0b0"/><rect x="867" y="100" width="1" height="1" fill="#b0b0b0"/><rect x="870" y="100" width="1" height="1" fill="#b0b0b0"/><rect x="867" y="103" width="1" height="1" fill="#b0b0b0"/><rect x="870" y="103" width="1" height="1" fill="#b0b0b0"/><rect x="867" y="106" width="1" height="1" fill="#b0b0b0"/><rect x="870" y="106" width="1" height="1" fill="#b0b0b0"/>
<path d="M885,87.5h10.5l6.5,6.5v14.5a2,2 0 0 1 -2,2h-15a2,2 0 0 1 -2,-2v-19a2,2 0 0 1 2,-2z" fill="#22c0d8" stroke="#173c48" stroke-width="1.1"/><path d="M883.6,100.5h18.3v8a1.5,1.5 0 0 1 -1.5,1.5h-15.3a1.5,1.5 0 0 1 -1.5,-1.5z" fill="#f0dc20"/><path d="M895.5,87.5v6.5h6.5" fill="none" stroke="#173c48" stroke-width="1"/><rect x="879" y="96.5" width="18" height="8.5" rx="1" fill="#f8f8f8" stroke="#8a9a9a" stroke-width="0.8"/><text x="880.2" y="103.8" font-size="7.6" font-weight="bold" fill="#111" font-family="Liberation Sans" textLength="15.6" lengthAdjust="spacingAndGlyphs">JSON</text>
<path d="M908,98h8l-4,4.5z" fill="#555"/></svg>
<div id="map" class="a"><svg width="980" height="300" viewBox="53 120 980 300" style="position:absolute;left:0;top:0">
<polygon points="344.5,421 357.5,326 435.5,309.5 697,407.5 708.4,411.9 707,421" fill="#ffb3b3"/>
<polygon points="728.4,339.7 870,421 707,421 708.4,411.9" fill="#ffd6d6"/>
<polygon points="382,127 558,243 728.4,339.7 708.4,411.9 435,349 357.5,326" fill="#fde387"/>
<polygon points="357.5,326 435.5,309.5 697,407.5 708.4,411.9 435,349" fill="#fdb05f"/>
<g fill="none" stroke-width="1.35" stroke-linejoin="round">
<polyline points="728.4,339.7 870,421" stroke="#a00c0c"/>
<polygon points="382,127 558,243 728.4,339.7 708.4,411.9 435,349 357.5,326" stroke="#ee1111"/>
<polyline points="344.5,421 357.5,326 435.5,309.5 697,407.5 708.4,411.9 707,421" stroke="#ee1111"/>
</g>
<g stroke="#f04848" stroke-width="1">
<path d="M378,123l8,8M386,123l-8,8"/>
<path d="M554,239l8,8M562,239l-8,8"/>
<path d="M724,336l8,8M732,336l-8,8"/>
<path d="M353.5,322l8,8M361.5,322l-8,8"/>
<path d="M431,345l8,8M439,345l-8,8"/>
<path d="M693.5,404l8,8M701.5,404l-8,8"/>
<path d="M704.4,408l8,8M712.4,408l-8,8"/>
</g>
</svg></div>
<div id="lefttb" class="a" style="background:linear-gradient(90deg,#fbfbfb,#ebebeb)"></div>
<svg width="52" height="621" style="left:0;top:119px" viewBox="0 119 52 621"><rect x="18" y="126" width="1" height="1" fill="#b8b8b8"/>
<rect x="21" y="126" width="1" height="1" fill="#b8b8b8"/>
<rect x="24" y="126" width="1" height="1" fill="#b8b8b8"/>
<rect x="27" y="126" width="1" height="1" fill="#b8b8b8"/>
<rect x="30" y="126" width="1" height="1" fill="#b8b8b8"/>
<rect x="33" y="126" width="1" height="1" fill="#b8b8b8"/>
<path d="M14.5,158.5v-23l23,23z" fill="#e4e0dc" stroke="#bbb" stroke-width="0.8"/><path d="M18,155v-8l8,8z" fill="#fff" stroke="#bbb" stroke-width="0.6"/><rect x="31" y="136" width="6" height="22" fill="#e4e0dc" stroke="#bbb" stroke-width="0.6"/><path d="M33,139h4M34,142h3M33,145h4M34,148h3M33,151h4" stroke="#bbb" stroke-width="0.6"/>
<path transform="translate(9,166) scale(1,1.18)" d="M3,1.2C6,-0.6 11,0.8 14,1.4C17.5,0.8 21.5,1 21.8,4.6C22.1,8.2 19,10.6 16,9.8C13,9 9,11.4 5,11.2C1,11 -0.8,4 3,1.2z" fill="#8ac08a" stroke="#555" stroke-width="0.8"/><rect x="21" y="180" width="11" height="11" rx="1.5" fill="#2e5a78"/><path d="M22.5,184h4.5v-2.5l3.5,4 -3.5,4v-2.5h-4.5z" fill="#fff"/><path d="M38,177h7l-3.5,4z" fill="#555"/>
<path transform="translate(15,198) scale(1,1.18)" d="M3,1.2C6,-0.6 11,0.8 14,1.4C17.5,0.8 21.5,1 21.8,4.6C22.1,8.2 19,10.6 16,9.8C13,9 9,11.4 5,11.2C1,11 -0.8,4 3,1.2z" fill="#8ac08a" stroke="#555" stroke-width="0.8"/><rect x="27" y="212" width="11" height="11" rx="1.5" fill="#2e5a78"/><path d="M34.5,220.5a3.2,3.2 0 1 1 1,-3" fill="none" stroke="#fff" stroke-width="1.5"/><path d="M33,219l3,2.5 0.5,-3.5z" fill="#fff"/>
<path transform="translate(15,230) scale(1,1.18)" d="M3,1.2C6,-0.6 11,0.8 14,1.4C17.5,0.8 21.5,1 21.8,4.6C22.1,8.2 19,10.6 16,9.8C13,9 9,11.4 5,11.2C1,11 -0.8,4 3,1.2z" fill="#8ac08a" stroke="#555" stroke-width="0.8"/><rect x="27" y="244" width="11" height="11" rx="1.5" fill="#2e5a78"/><path d="M29,249.5h7M29,249.5l2,-2M29,249.5l2,2M36,249.5l-2,-2M36,249.5l-2,2" stroke="#fff" stroke-width="1.3"/>
<circle cx="22.5" cy="270" r="7.5" fill="#8ac08a" stroke="#555" stroke-width="0.8"/><path d="M29.5,268l7.5,4.3v8.6l-7.5,4.3 -7.5,-4.3v-8.6z" fill="#a8c8e0" stroke="#555" stroke-width="0.8"/><path d="M22,269l7,7" stroke="#333" stroke-width="1"/><path d="M29.5,276.5l-3,-0.5 2.5,-2.5z" fill="#333"/>
<path transform="translate(15,295) scale(1,1.18)" d="M3,1.2C6,-0.6 11,0.8 14,1.4C17.5,0.8 21.5,1 21.8,4.6C22.1,8.2 19,10.6 16,9.8C13,9 9,11.4 5,11.2C1,11 -0.8,4 3,1.2z" fill="#8ac08a" stroke="#555" stroke-width="0.8"/><ellipse cx="23" cy="301" rx="4.5" ry="3" fill="#fff" stroke="#555" stroke-width="0.6"/><rect x="27" y="308" width="11" height="11" rx="1.5" fill="#c9a000"/><circle cx="32.5" cy="313.5" r="2.20" fill="none" stroke="#fff" stroke-width="1.10"/><path d="M35.36,313.50L36.90,313.50M34.52,315.52L35.61,316.61M32.50,316.36L32.50,317.90M30.48,315.52L29.39,316.61M29.64,313.50L28.10,313.50M30.48,311.48L29.39,310.39M32.50,310.64L32.50,309.10M34.52,311.48L35.61,310.39" stroke="#fff" stroke-width="0.99"/>
<path transform="translate(15,327) scale(1,1.18)" d="M3,1.2C6,-0.6 11,0.8 14,1.4C17.5,0.8 21.5,1 21.8,4.6C22.1,8.2 19,10.6 16,9.8C13,9 9,11.4 5,11.2C1,11 -0.8,4 3,1.2z" fill="#bbb" stroke="#555" stroke-width="0.8"/><path d="M16,348c0,-4 3,-6 8,-7c0,4 -2,8 -8,7z" fill="#8ac08a" stroke="#555" stroke-width="0.6"/><rect x="27" y="340" width="11" height="11" rx="1.5" fill="#c9a000"/><circle cx="32.5" cy="345.5" r="2.20" fill="none" stroke="#fff" stroke-width="1.10"/><path d="M35.36,345.50L36.90,345.50M34.52,347.52L35.61,348.61M32.50,348.36L32.50,349.90M30.48,347.52L29.39,348.61M29.64,345.50L28.10,345.50M30.48,343.48L29.39,342.39M32.50,342.64L32.50,341.10M34.52,343.48L35.61,342.39" stroke="#fff" stroke-width="0.99"/>
<path transform="translate(15,359) scale(1,1.18)" d="M3,1.2C6,-0.6 11,0.8 14,1.4C17.5,0.8 21.5,1 21.8,4.6C22.1,8.2 19,10.6 16,9.8C13,9 9,11.4 5,11.2C1,11 -0.8,4 3,1.2z" fill="#bbb" stroke="#555" stroke-width="0.8"/><ellipse cx="23" cy="365" rx="4.5" ry="3" fill="#8ac08a" stroke="#555" stroke-width="0.6"/><rect x="27" y="372" width="11" height="11" rx="1.5" fill="#c9a000"/><circle cx="32.5" cy="377.5" r="2.20" fill="none" stroke="#fff" stroke-width="1.10"/><path d="M35.36,377.50L36.90,377.50M34.52,379.52L35.61,380.61M32.50,380.36L32.50,381.90M30.48,379.52L29.39,380.61M29.64,377.50L28.10,377.50M30.48,375.48L29.39,374.39M32.50,374.64L32.50,373.10M34.52,375.48L35.61,374.39" stroke="#fff" stroke-width="0.99"/>
<path transform="translate(15,391) scale(1,1.18)" d="M3,1.2C6,-0.6 11,0.8 14,1.4C17.5,0.8 21.5,1 21.8,4.6C22.1,8.2 19,10.6 16,9.8C13,9 9,11.4 5,11.2C1,11 -0.8,4 3,1.2z" fill="#8ac08a" stroke="#555" stroke-width="0.8"/><ellipse cx="23" cy="397" rx="4.5" ry="3" fill="#fff" stroke="#555" stroke-width="0.6"/><rect x="28" y="405" width="10" height="10" rx="1.5" fill="#e06060"/><path d="M30.5,407.5l5,5M35.5,407.5l-5,5" stroke="#fff" stroke-width="1.6"/>
<path transform="translate(15,423) scale(1,1.18)" d="M3,1.2C6,-0.6 11,0.8 14,1.4C17.5,0.8 21.5,1 21.8,4.6C22.1,8.2 19,10.6 16,9.8C13,9 9,11.4 5,11.2C1,11 -0.8,4 3,1.2z" fill="#bbb" stroke="#555" stroke-width="0.8"/><path d="M16,444c0,-4 3,-6 8,-7c0,4 -2,8 -8,7z" fill="#8ac08a" stroke="#555" stroke-width="0.6"/><rect x="28" y="437" width="10" height="10" rx="1.5" fill="#e06060"/><path d="M30.5,439.5l5,5M35.5,439.5l-5,5" stroke="#fff" stroke-width="1.6"/>
<path d="M16,462c0,-5 5,-6 10,-5c5,1 10,0 11,4c1,4 -2,7 -6,7c-4,0 -6,2 -7,6c-1,4 -7,4 -7,-2z" fill="#8ac08a" stroke="#555" stroke-width="0.8"/><path d="M17,470c0,3 1,6 3,6c3,0 4,-2 4,-5z" fill="#d8b830"/>
<path d="M17,504c-3,-3 -2,-8 3,-10c4,-2 7,-6 11,-6c5,0 6,5 3,9c-2,3 -4,6 -8,9c-4,3 -7,1 -9,-2z" fill="#d8b830" stroke="#555" stroke-width="0.8"/><path d="M20,502c-1,-2 0,-5 3,-6c3,-1 5,-4 8,-4c3,0 3,3 1,6c-2,2 -3,4 -6,6c-3,1 -5,0 -6,-2z" fill="#8ac08a"/>
<path d="M16,523l7,11 7,-9h8M23,534v5" stroke="#ccc" stroke-width="1" fill="none"/><rect x="14.5" y="521.5" width="3" height="3" fill="#fff" stroke="#ccc"/><rect x="28.5" y="523.5" width="3" height="3" fill="#fff" stroke="#ccc"/><rect x="34.5" y="523.5" width="3" height="3" fill="#fff" stroke="#ccc"/><rect x="21.5" y="533.5" width="3" height="3" fill="#fff" stroke="#ccc"/><rect x="27.5" y="532.5" width="10" height="10" rx="1.5" fill="#fff" stroke="#ccc"/><circle cx="32.5" cy="537.5" r="2.5" fill="none" stroke="#ccc"/>
<path d="M24,552v12M15,562h22" stroke="#555" stroke-width="1"/><path d="M24,552v9" stroke="#2a8a3a" stroke-width="2"/><path d="M23,566l-2,6M30,566v10" stroke="#d04010" stroke-width="1"/><path d="M30,566v10" stroke="#2a8a3a" stroke-width="1.6"/><rect x="21.5" y="559.5" width="4" height="4" fill="#fff" stroke="#555"/><rect x="28.5" y="559.5" width="4" height="4" fill="#fff" stroke="#555"/><rect x="30" y="552" width="8" height="8" rx="1.5" fill="#c9a000"/><circle cx="34.0" cy="556.0" r="1.60" fill="none" stroke="#fff" stroke-width="0.80"/><path d="M36.08,556.00L37.20,556.00M35.47,557.47L36.26,558.26M34.00,558.08L34.00,559.20M32.53,557.47L31.74,558.26M31.92,556.00L30.80,556.00M32.53,554.53L31.74,553.74M34.00,553.92L34.00,552.80M35.47,554.53L36.26,553.74" stroke="#fff" stroke-width="0.72"/><rect x="15" y="568" width="10" height="10" rx="1.5" fill="#e06060"/><path d="M17.5,570.5l5,5M22.5,570.5l-5,5" stroke="#fff" stroke-width="1.6"/>
<path d="M16,589c0,-4 3,-6 6.5,-6c1.5,0 2.5,1 2.5,2.5v7c0,1.5 -1.5,2 -3,2c-3.5,0 -6,-2 -6,-5.5z" fill="#bbb" stroke="#555" stroke-width="0.7"/><path d="M27,585.5c0,-1.5 1.5,-2.5 3,-2.5c4,0 6,2.5 6,5.5c0,3 -2.5,5.5 -6,5.5c-1.5,0 -3,-1 -3,-2.5z" fill="#8ac08a" stroke="#555" stroke-width="0.7"/><path d="M24,583l5,14M28,583l-5,14" stroke="#999" stroke-width="1.3"/><ellipse cx="21" cy="601.5" rx="2.6" ry="4" transform="rotate(30 21 601.5)" fill="none" stroke="#c01818" stroke-width="1.5"/><ellipse cx="31" cy="601.5" rx="2.6" ry="4" transform="rotate(-30 31 601.5)" fill="none" stroke="#c01818" stroke-width="1.5"/>
<path d="M16,621c0,-4 3,-6 6.5,-6c1.5,0 2.5,1 2.5,2.5v7c0,1.5 -1.5,2 -3,2c-3.5,0 -6,-2 -6,-5.5z" fill="#ddd" stroke="#ccc" stroke-width="0.7"/><path d="M27,617.5c0,-1.5 1.5,-2.5 3,-2.5c4,0 6,2.5 6,5.5c0,3 -2.5,5.5 -6,5.5c-1.5,0 -3,-1 -3,-2.5z" fill="#ddd" stroke="#ccc" stroke-width="0.7"/><path d="M24,615l5,14M28,615l-5,14" stroke="#e4e4e4" stroke-width="1.3"/><ellipse cx="21" cy="633.5" rx="2.6" ry="4" transform="rotate(30 21 633.5)" fill="none" stroke="#ddd" stroke-width="1.4"/><ellipse cx="31" cy="633.5" rx="2.6" ry="4" transform="rotate(-30 31 633.5)" fill="none" stroke="#ddd" stroke-width="1.4"/>
<path d="M24.5,649c-1,-1.5 -3,-2 -5,-1.5c-3,0.5 -4.5,3 -4,6c0.5,3 3,5 6,4.5c1.5,-0.3 2.5,-1 3,-2z" fill="#8ac08a" stroke="#444" stroke-width="0.8"/><path d="M27.5,650c1,-1.5 3,-1.5 5,-1c3,0.8 4,3.5 3,6c-1,2.5 -3.5,3.5 -6,2.5c-1,-0.5 -2,-1 -2,-2z" fill="#8ac08a" stroke="#444" stroke-width="0.8"/><path d="M23.5,651.5h5M23.5,654h5" stroke="#444" stroke-width="0.8"/><path d="M20,658c0,3 3,6 7,9" stroke="#333" stroke-width="0.9" fill="none"/>
<rect x="16" y="681.5" width="20" height="5" fill="#fff"/><path d="M16,681.5h20M16,686.5h7.5v-4.5h4v4.5h8.5" stroke="#555" stroke-width="0.9" fill="none"/><path d="M21.5,684.5l1.5,-1.5M30.5,684.5l-1.5,-1.5" stroke="#444" stroke-width="0.7"/><rect x="16" y="688.5" width="20" height="5" fill="#fff"/><path d="M16,688.5h20M16,693.5h7.5v-4.5h4v4.5h8.5" stroke="#555" stroke-width="0.9" fill="none"/><path d="M21.5,691.5l1.5,-1.5M30.5,691.5l-1.5,-1.5" stroke="#444" stroke-width="0.7"/><rect x="16" y="695.5" width="20" height="5" fill="#fff"/><path d="M16,695.5h20M16,700.5h7.5v-4.5h4v4.5h8.5" stroke="#555" stroke-width="0.9" fill="none"/><path d="M21.5,698.5l1.5,-1.5M30.5,698.5l-1.5,-1.5" stroke="#444" stroke-width="0.7"/>
<path d="M22,729l4,3 4,-3M22,733l4,3 4,-3" stroke="#444" stroke-width="1.1" fill="none"/></svg>
<div id="dock" class="a">
<div class="a" style="left:-1px;top:0;width:1px;height:320px;background:#a0a0a0"></div>
</div>
<div class="t" style="left:58px;top:432px">agro_soil_err — Features Total: 1 547, Filtered: 1, Selected: 1</div>
<svg width="11" height="11" style="left:1007px;top:431px" viewBox="0 0 11 11"><rect x="0.6" y="0.6" width="9.8" height="9.8" rx="2" fill="none" stroke="#606060" stroke-width="1.2"/><rect x="2.3" y="4.3" width="4.2" height="4.2" rx="1" fill="none" stroke="#606060" stroke-width="1"/><path d="M4.5,4.2V3a0.8,0.8 0 0 1 0.8,-0.8h2.6a0.8,0.8 0 0 1 0.8,0.8v2.6a0.8,0.8 0 0 1 -0.8,0.8H6.6" fill="none" stroke="#606060" stroke-width="1"/></svg>
<svg width="11" height="11" style="left:1021px;top:431px" viewBox="0 0 11 11"><rect x="0.6" y="0.6" width="9.8" height="9.8" rx="2" fill="none" stroke="#606060" stroke-width="1.2"/><path d="M3,3l5,5M8,3l-5,5" stroke="#555" stroke-width="1.7"/></svg>
<svg width="20" height="4" style="left:535px;top:422px" viewBox="535 422 20 4"><g fill="#a0a0a0"><rect x="536" y="423" width="1" height="1"/><rect x="539" y="423" width="1" height="1"/><rect x="542" y="423" width="1" height="1"/><rect x="545" y="423" width="1" height="1"/><rect x="548" y="423" width="1" height="1"/><rect x="551" y="423" width="1" height="1"/></g></svg>
<div class="chk" style="left:56px;top:450px;width:24px;height:23px"></div>
<div class="chk" style="left:666px;top:450px;width:24px;height:23px"></div>
<!--DTB--><svg width="640" height="30" style="left:50px;top:448px" viewBox="50 448 640 30"><path d="M61,470l1.5,-4 6.5,-10 2.8,1.8 -6.5,10z" fill="#e8d840" stroke="#a89020" stroke-width="0.7"/><path d="M61,470l0.4,-2.4 2,1.3z" fill="#777"/>
<g fill="#fce04a" stroke="#c8a020" stroke-width="0.7"><rect x="86.5" y="455.5" width="14" height="3.5"/><rect x="86.5" y="460.5" width="14" height="3.5"/><rect x="86.5" y="465.5" width="14" height="3.5"/></g><path d="M90,470l1.5,-3.5 7,-10 2.5,1.6 -7,10z" fill="#e87830" stroke="#8a4010" stroke-width="0.6"/>
<rect x="110.5" y="454.5" width="14" height="14" rx="1.5" fill="#e8e8e8" stroke="#d8d8d8"/><rect x="113" y="456" width="8" height="4" fill="#f4f4f4"/>
<path d="M137,459a6.5,6.5 0 0 1 11.5,-2l1.5,-2v6h-6l2,-2a4,4 0 0 0 -7,1z" fill="#d8d8d8"/><path d="M150,464a6.5,6.5 0 0 1 -11.5,2l-1.5,2v-6h6l-2,2a4,4 0 0 0 7,-1z" fill="#d8d8d8"/>
<rect x="160" y="454" width="1" height="14" fill="#d0d0d0"/>
<rect x="168.5" y="454.5" width="15" height="13" fill="#fff" stroke="#6a9ad4"/><rect x="169" y="455" width="14" height="3" fill="#c0d4f0"/><path d="M170,461h12M170,464h12" stroke="#e8c840" stroke-width="1.4"/><rect x="176" y="461" width="8" height="8" rx="1.5" fill="#c9a000"/><circle cx="180.0" cy="465.0" r="1.60" fill="none" stroke="#fff" stroke-width="0.80"/><path d="M182.08,465.00L183.20,465.00M181.47,466.47L182.26,467.26M180.00,467.08L180.00,468.20M178.53,466.47L177.74,467.26M177.92,465.00L176.80,465.00M178.53,463.53L177.74,462.74M180.00,462.92L180.00,461.80M181.47,463.53L182.26,462.74" stroke="#fff" stroke-width="0.72"/><path d="M181,469h4l-2,2z" fill="#333"/>
<rect x="193" y="454" width="7" height="6" fill="#fce04a" stroke="#c8a020" stroke-width="0.5"/><path d="M193.5,457.5h12M195.5,459.5h8l-0.8,9h-6.4z" fill="#f07070" stroke="#d81818" stroke-width="1.3"/><path d="M198,461v6M200,461v6" stroke="#fff" stroke-width="0.6"/>
<path d="M217,458l11,5M217,463l11,-5" stroke="#888" stroke-width="1.2"/><circle cx="230" cy="457.5" r="2" fill="none" stroke="#b82020" stroke-width="1.2"/><circle cx="230" cy="464" r="2" fill="none" stroke="#b82020" stroke-width="1.2"/>
<path d="M248.5,454.5h5l2,2v8h-7z" fill="#f4f4f4" stroke="#bbb" stroke-width="0.7"/><path d="M243.5,457.5h5l2,2v9h-7z" fill="#eee" stroke="#aaa" stroke-width="0.8"/>
<rect x="269.5" y="454.5" width="11" height="14" rx="1" fill="#eedcc0" stroke="#c8a060" stroke-width="0.8"/><rect x="271.5" y="456.5" width="7" height="10" fill="#eee" stroke="#999" stroke-width="0.6"/><rect x="272" y="453.5" width="6" height="2" fill="#aaa"/>
<rect x="292" y="454" width="1" height="14" fill="#d0d0d0"/>
<rect x="304.5" y="458.5" width="9.5" height="10" rx="1" fill="#fce04a" stroke="#c8a020" stroke-width="0.7"/><path d="M308,455.6C307.5,453.8 303.5,453.4 302.7,455.7C302.2,457.4 303.7,458.4 306.3,458.4M306.3,458.4C302.6,458.4 301.1,459.5 301.3,461.2C301.6,463.5 306.8,463.8 308.2,461.3" fill="none" stroke="#6a3a8a" stroke-width="1.3" stroke-linecap="round"/>
<g fill="#fce04a" stroke="#c8a020" stroke-width="0.7"><rect x="325.5" y="454.5" width="13" height="3.5" rx="1"/><rect x="325.5" y="459.5" width="13" height="3.5" rx="1"/><rect x="325.5" y="464.5" width="13" height="3.5" rx="1"/></g>
<rect x="350.5" y="454.5" width="13" height="13" fill="#e8e8e8" stroke="#888" stroke-width="0.7"/><path d="M350.5,454.5v13h13z" fill="#fce04a" stroke="#c8a020" stroke-width="0.7"/><path d="M350.5,454.5l13,13" stroke="#444" stroke-width="0.8"/>
<rect x="375.5" y="454.5" width="9" height="9" rx="1" fill="#fce04a" stroke="#c8a020" stroke-width="0.7"/><rect x="382" y="461" width="7" height="7" rx="1.5" fill="#e02828"/><circle cx="385.5" cy="464.5" r="2" fill="none" stroke="#fff" stroke-width="0.8"/>
<path d="M400.5,454.5h13l-4.5,5.5v8l-4,-2v-6z" fill="#4a84c4" stroke="#3a6aa4" stroke-width="0.6"/><rect x="400.5" y="454.5" width="13" height="1.8" fill="#f4e04a"/>
<rect x="425.5" y="454.5" width="14" height="13" fill="#c8dcf4" stroke="#6a9ad4" stroke-width="0.8"/><rect x="426" y="464" width="13" height="3" fill="#e8c840"/><path d="M432.5,456v8M429.5,459l3,-3 3,3" stroke="#2a5a98" stroke-width="1.3" fill="none"/>
<rect x="451" y="455" width="11" height="11" fill="#fce04a" stroke="#c8a020" stroke-width="0.6"/><g fill="#4a84c4"><path d="M456.5,453l3,3h-6z M456.5,469l3,-3h-6z M448.5,461l3,3v-6z M464.5,461l-3,3v-6z"/><rect x="455.5" y="456" width="2" height="10"/><rect x="451" y="460" width="11" height="2"/></g>
<rect x="474" y="454" width="6" height="8" fill="#fce04a" stroke="#c8a020" stroke-width="0.6"/><path d="M478,464l-4,4" stroke="#444" stroke-width="2.4" stroke-linecap="round"/><path d="M477,465l-3,3" stroke="#e8c020" stroke-width="1.4" stroke-linecap="round"/><circle cx="484" cy="459" r="5.2" fill="#f0eee0" stroke="#444" stroke-width="1.1"/>
<rect x="497" y="454" width="1" height="14" fill="#d0d0d0"/>
<rect x="506.5" y="454.5" width="14" height="13" fill="#c8dcf4" stroke="#6a9ad4" stroke-width="0.8"/><rect x="511" y="454" width="4" height="14" fill="#e8d060" stroke="#b89830" stroke-width="0.5"/><rect x="515" y="461" width="8" height="8" rx="1.5" fill="#c9a000"/><circle cx="519.0" cy="465.0" r="1.60" fill="none" stroke="#fff" stroke-width="0.80"/><path d="M521.08,465.00L522.20,465.00M520.47,466.47L521.26,467.26M519.00,467.08L519.00,468.20M517.53,466.47L516.74,467.26M516.92,465.00L515.80,465.00M517.53,463.53L516.74,462.74M519.00,462.92L519.00,461.80M520.47,463.53L521.26,462.74" stroke="#fff" stroke-width="0.72"/>
<rect x="531.5" y="454.5" width="14" height="13" fill="#c8dcf4" stroke="#6a9ad4" stroke-width="0.8"/><rect x="536" y="454" width="4" height="14" fill="#e89090" stroke="#c05050" stroke-width="0.5"/><rect x="540" y="461" width="7" height="7" rx="1" fill="#e06060"/><path d="M541.5,462.5l4,4M545.5,462.5l-4,4" stroke="#fff" stroke-width="1.1"/>
<rect x="556.5" y="454.5" width="14" height="13" fill="#c8dcf4" stroke="#6a9ad4" stroke-width="0.8"/><path d="M558,469l1.3,-3.5 7,-10 2.5,1.6 -7,10z" fill="#e87830" stroke="#8a4010" stroke-width="0.6"/>
<rect x="581" y="454" width="1.2" height="14" fill="#555"/><rect x="596" y="454" width="1.2" height="14" fill="#555"/><rect x="580" y="467" width="18" height="1.5" fill="#555"/><path d="M582,457h14M582,461h14M582,465h14" stroke="#888" stroke-width="0.6"/><g stroke-width="0.7" fill="#fff"><circle cx="586" cy="457" r="1.4" stroke="#d03030"/><circle cx="592" cy="457" r="1.4" stroke="#d03030"/><circle cx="585" cy="461" r="1.4" stroke="#40a040"/><circle cx="589" cy="461" r="1.4" stroke="#40a040"/><circle cx="585" cy="465" r="1.4" stroke="#4a84c4"/><circle cx="589" cy="465" r="1.4" stroke="#4a84c4"/><circle cx="593" cy="465" r="1.4" stroke="#4a84c4"/></g>
<rect x="605" y="454" width="1" height="14" fill="#d0d0d0"/>
<rect x="614.5" y="454.5" width="14" height="3.5" rx="1" fill="#fff" stroke="#999" stroke-width="0.6"/><rect x="614.5" y="459.5" width="14" height="3.5" rx="1" fill="#8ad88a" stroke="#5a9a5a" stroke-width="0.6"/><rect x="614.5" y="464.5" width="14" height="3.5" rx="1" fill="#fff" stroke="#999" stroke-width="0.6"/><path d="M617,456h9M616,466h3" stroke="#555" stroke-width="0.9"/><path d="M616,466h3" stroke="#d02020" stroke-width="1.2"/>
<rect x="637" y="454" width="1" height="14" fill="#d0d0d0"/>
<circle cx="651.5" cy="460" r="6" fill="#eee" stroke="#777" stroke-width="0.9" stroke-dasharray="1.6 0.9"/><circle cx="651.5" cy="460" r="3.8" fill="#5a8ed0"/><path d="M650.2,458v4l3,-2z" fill="#fff"/><path d="M654,462v7.5l1.8,-1.8 1.5,3 1.2,-0.6 -1.5,-3h2.6z" fill="#fff" stroke="#555" stroke-width="0.6"/>
<rect x="670.5" y="454.5" width="14" height="13" fill="#fff" stroke="#888" stroke-width="0.8"/><rect x="671" y="455" width="13" height="3" fill="#555"/><rect x="672.5" y="460.5" width="10" height="6" fill="#c8dcf4" stroke="#6a9ad4" stroke-width="0.6"/></svg>
<!--/DTB-->
<!-- filter row -->
<div class="btn" style="left:55px;top:478px;width:117px;height:24px"></div>
<div class="t" style="left:61px;top:485px;font-size:9px;font-weight:bold;color:#555">abc</div>
<div class="t" style="left:79px;top:485px">layer</div>
<svg width="9" height="5" style="left:155px;top:488px" viewBox="0 0 9 5"><path d="M0,0h9l-4.5,5z" fill="#444"/></svg>
<div class="t" style="left:175px;top:485px;font-size:12px">=</div>
<div class="btn" style="left:186px;top:478px;width:24px;height:24px"></div>
<svg width="10" height="12" style="left:193px;top:484px" viewBox="0 0 10 12"><path d="M8.8,2.6C8.2,0.6 3.5,0.2 2.6,2.8C2,4.8 3.8,5.9 6.8,5.9M6.8,5.9C2.6,5.9 0.9,7.2 1.1,9.1C1.4,11.7 7.4,12.1 9,9.2" fill="none" stroke="#5a2a6e" stroke-width="1.5" stroke-linecap="round"/></svg>
<div class="field" style="left:216px;top:478px;width:614px;height:24px;border-radius:3px"></div>
<div class="a" style="left:809px;top:479px;width:1px;height:22px;background:#d0d0d0"></div>
<div class="t" style="left:221px;top:485px;font-size:9px;font-weight:bold;color:#555">abc</div>
<svg width="9" height="5" style="left:815px;top:488px" viewBox="0 0 9 5"><path d="M0,0h9l-4.5,5z" fill="#444"/></svg>
<div class="btn" style="left:833px;top:480px;width:95px;height:20px"></div>
<div class="t" style="left:839px;top:485px">Оновити фільтр</div>
<div class="btn" style="left:931px;top:480px;width:103px;height:20px"></div>
<div class="t" style="left:937px;top:485px">Оновити вибране</div>
<!-- left list -->
<svg width="9" height="11" style="left:57px;top:509px" viewBox="0 0 10 12"><path d="M8.8,2.6C8.2,0.6 3.5,0.2 2.6,2.8C2,4.8 3.8,5.9 6.8,5.9M6.8,5.9C2.6,5.9 0.9,7.2 1.1,9.1C1.4,11.7 7.4,12.1 9,9.2" fill="none" stroke="#5a2a6e" stroke-width="1.5" stroke-linecap="round"/></svg>
<svg width="8" height="8" style="left:63px;top:516px" viewBox="0 0 8 8"><circle cx="5" cy="3" r="2.4" fill="#fff" stroke="#aaa" stroke-width="0.8"/><path d="M3.3,4.7L1,7" stroke="#d8b040" stroke-width="1.2"/></svg>
<div class="t" style="left:72px;top:512px">Вираз</div>
<svg width="6" height="4" style="left:299px;top:521px" viewBox="0 0 6 4"><path d="M0,0h6l-3,4z" fill="#555"/></svg>
<div class="a" style="left:52px;top:530px;width:256px;height:158px;background:#fff;border:1px solid #a0a0a0;border-right-color:#a8a8a8"></div>
<div class="a" style="left:53px;top:531px;width:254px;height:24px;background:#f0f0f0"></div>
<div class="a" style="left:57px;top:535px;width:14px;height:13px;background:#ffe34c;border:1px solid #c9a400"></div>
<div class="t" style="left:79px;top:539px">agro_soil</div>
<!-- nav -->
<svg width="150" height="16" style="left:56px;top:693px" viewBox="0 0 150 16"><g fill="#d4d4d4" stroke="#c0c0c0" stroke-width="0.6"><path d="M8,1L1,8l7,7z M15,1L8,8l7,7z"/><path d="M38,1l-9,7 9,7z"/><path d="M54,1l9,7 -9,7z"/><path d="M77,1l7,7 -7,7z M84,1l7,7 -7,7z"/></g></svg>
<div class="t" style="left:152px;top:696px;font-size:14px;letter-spacing:1px">1 / 1</div>
<div class="chk" style="left:214px;top:690px;width:24px;height:23px"></div>
<svg width="14" height="17" style="left:219px;top:692px" viewBox="0 0 14 17"><path d="M7,1a5.2,5.2 0 0 0 -3,9.5v2.5h6v-2.5a5.2,5.2 0 0 0 -3,-9.5z" fill="#f6f060" stroke="#d8c830" stroke-width="0.8"/><rect x="4.5" y="13" width="5" height="2.6" fill="#777"/></svg>
<svg width="16" height="16" style="left:263px;top:693px" viewBox="0 0 16 16"><g fill="#4a7fc0"><path d="M8,0.5l3,3 -3,3 -3,-3z M8,9.5l3,3 -3,3 -3,-3z M0.5,8l3,-3 3,3 -3,3z M9.5,8l3,-3 3,3 -3,3z"/></g></svg>
<div class="chk" style="left:284px;top:690px;width:24px;height:23px"></div>
<svg width="16" height="16" style="left:288px;top:693px" viewBox="0 0 16 16"><circle cx="9.5" cy="6.5" r="5" fill="#fdfdf0" stroke="#444" stroke-width="1.2"/><path d="M6,10L1.5,14.5" stroke="#444" stroke-width="2.2"/><path d="M5.5,10.5L2,14" stroke="#e8b830" stroke-width="1.2"/></svg>
<div class="btn" style="left:55px;top:716px;width:163px;height:23px;border-radius:3px"></div>
<svg width="14" height="14" style="left:59px;top:720px" viewBox="0 0 14 14"><rect x="0.5" y="0.5" width="13" height="13" fill="#bcd4ec" stroke="#6a94c4"/><rect x="2" y="4" width="10" height="8" fill="#f4d84a" stroke="#c8a820" stroke-width="0.6"/><path d="M2,8h10M7,4v8" stroke="#c8a820" stroke-width="0.6"/></svg>
<div class="t" style="left:75px;top:723px">Показати вибрані об’єкти</div>
<svg width="6" height="4" style="left:210px;top:732px" viewBox="0 0 6 4"><path d="M0,0h6l-3,4z" fill="#555"/></svg>
<!-- form frame -->
<svg width="4" height="20" style="left:309px;top:600px" viewBox="309 600 4 20"><g fill="#a8a8a8"><rect x="310" y="602" width="1" height="1"/><rect x="310" y="605" width="1" height="1"/><rect x="310" y="608" width="1" height="1"/><rect x="310" y="611" width="1" height="1"/><rect x="310" y="614" width="1" height="1"/><rect x="310" y="617" width="1" height="1"/></g></svg>
<div class="a" style="left:312px;top:505px;width:722px;height:208px;border:2px solid #b9b9b9"></div>
<div class="t" style="left:332px;top:532px">layer</div>
<div class="t" style="left:332px;top:560px">feature_id</div>
<div class="t" style="left:332px;top:588px">feature_index</div>
<div class="t" style="left:332px;top:616px">error</div>
<div class="field" style="left:406px;top:525px;width:597px;height:22px;border-radius:3px"></div>
<div class="field" style="left:406px;top:553px;width:597px;height:22px;border-radius:3px"></div>
<div class="field" style="left:406px;top:581px;width:597px;height:22px;border-radius:3px"></div>
<div class="field" style="left:406px;top:609px;width:597px;height:22px;border-radius:3px"></div>
<div class="t" style="left:408px;top:532px">agro_soil</div>
<div class="t" style="left:408px;top:616px">Топологія: перекривання з agro_soil.</div>
<svg width="15" height="11" style="left:980px;top:531px" viewBox="0 0 15 11"><path d="M5,0.5h9.5v10h-9.5l-4.5,-5z" fill="#8c8c8c"/><path d="M7.5,3l4.5,4.5M12,3l-4.5,4.5" stroke="#fff" stroke-width="1.3"/></svg>
<svg width="15" height="11" style="left:980px;top:615px" viewBox="0 0 15 11"><path d="M5,0.5h9.5v10h-9.5l-4.5,-5z" fill="#8c8c8c"/><path d="M7.5,3l4.5,4.5M12,3l-4.5,4.5" stroke="#fff" stroke-width="1.3"/></svg>
<div class="a" style="left:988px;top:582px;width:1px;height:20px;background:#d0d0d0"></div>
<svg width="10" height="14" style="left:990px;top:585px" viewBox="0 0 10 14"><path d="M1,6h8l-4,-5z" fill="#555"/><path d="M1,8h8l-4,5z" fill="#999"/></svg>
<!-- cursor -->
<svg width="14" height="20" style="left:447px;top:632px" viewBox="0 0 14 20"><path d="M1,1V15.5l3.6,-3.4 2.6,5.6 2.3,-1 -2.5,-5.5h5z" fill="#fff" stroke="#000" stroke-width="1"/></svg>
<!-- bottom right view buttons -->
<div class="chk" style="left:984px;top:716px;width:23px;height:22px"></div>
<svg width="14" height="14" style="left:988px;top:720px" viewBox="0 0 14 14"><rect x="3.5" y="0.5" width="9" height="13" fill="#dbe8f6" stroke="#5a8ac4"/><path d="M5,4h6M5,7h6M5,10h6M1,4h2M1,10h2" stroke="#5a8ac4"/></svg>
<svg width="14" height="14" style="left:1012px;top:720px" viewBox="0 0 14 14"><rect x="0.5" y="0.5" width="13" height="13" fill="#dbe8f6" stroke="#5a8ac4"/><path d="M1,4h12M1,7h12M1,10h12M4,1v12" stroke="#5a8ac4" stroke-width="0.9"/></svg>
<div id="layers" class="a"></div>
<div class="t" style="left:1043px;top:124px">Шари</div>
<!-- layer panel toolbar -->
<svg width="16" height="14" style="left:1048px;top:146px" viewBox="0 0 16 14"><path d="M1,6l6,-3 3,5 -5,4z" fill="#e84040"/><path d="M2,4l5,-2.5 2,3 -5,2.5z" fill="#f4d030"/><path d="M1.5,5.5l3,-1.5 1.5,2.5 -3,1.5z" fill="#6a9ad8"/><path d="M6,7l4,-1 2,3 -3,4 -4,-2z" fill="#d8a860" stroke="#a87830" stroke-width="0.6"/><path d="M10,7l5,-6" stroke="#c89040" stroke-width="1.8"/></svg>
<svg width="16" height="16" style="left:1073px;top:145px" viewBox="0 0 16 16"><path d="M0.5,9v6h8M3,6.5v6.5h8M5.5,3.5h6v7h-6z" fill="none" stroke="#777" stroke-width="0.9"/><path d="M7.5,5V1.5h2v5" fill="none" stroke="#777" stroke-width="0.9"/><circle cx="13" cy="13" r="2.6" fill="#5cb85c"/><path d="M11.3,13h3.4M13,11.3v3.4" stroke="#fff" stroke-width="1"/></svg>
<svg width="18" height="16" style="left:1098px;top:145px" viewBox="0 0 18 16"><path d="M1,7c3,-4 10,-4 13,0c-3,4 -10,4 -13,0z" fill="#e8e8e8" stroke="#888" stroke-width="0.8"/><circle cx="7.5" cy="7" r="3" fill="#5a8ac8"/><circle cx="7" cy="6.5" r="1" fill="#222"/><path d="M13,13h5l-2.5,2.5z" fill="#444"/></svg>
<svg width="18" height="17" style="left:1124px;top:145px" viewBox="0 0 18 17"><path d="M0.5,1.5h15l-5.5,6v7.5l-4,-2v-5.5z" fill="#4a84c4" stroke="#3a6aa4" stroke-width="0.6"/><rect x="0.5" y="0.5" width="15" height="2" fill="#f4e04a"/><path d="M12,13h5l-2.5,2.5z" fill="#444"/></svg>
<svg width="9" height="11" style="left:1149px;top:145px" viewBox="0 0 10 12"><path d="M8.8,2.6C8.2,0.6 3.5,0.2 2.6,2.8C2,4.8 3.8,5.9 6.8,5.9M6.8,5.9C2.6,5.9 0.9,7.2 1.1,9.1C1.4,11.7 7.4,12.1 9,9.2" fill="none" stroke="#6a3a8a" stroke-width="1.4" stroke-linecap="round"/></svg>
<svg width="24" height="12" style="left:1155px;top:150px" viewBox="0 0 24 12"><path d="M1,3h7l-1,8h-5z" fill="#aaa"/><path d="M14,3h8l-4,4z" fill="#444"/></svg>
<svg width="16" height="16" style="left:1186px;top:145px" viewBox="0 0 16 16"><path d="M1,1.5h4M1,1.5v13M1,4.5h3M1,10.5h3" stroke="#888" stroke-width="0.8" fill="none"/><rect x="2.5" y="3.5" width="3" height="3" fill="#fff" stroke="#f08a1a"/><rect x="2.5" y="9.5" width="3" height="3" fill="#fff" stroke="#f08a1a"/><path d="M10,1v8h-3l5,6 5,-6h-3v-8z" fill="#4a7fc0"/></svg>
<svg width="16" height="16" style="left:1211px;top:145px" viewBox="0 0 16 16"><path d="M1,1.5h4M1,1.5v13M1,4.5h3M1,10.5h3" stroke="#888" stroke-width="0.8" fill="none"/><rect x="2.5" y="3.5" width="3" height="3" fill="#fff" stroke="#f08a1a"/><rect x="2.5" y="9.5" width="3" height="3" fill="#fff" stroke="#f08a1a"/><path d="M10,15v-8h-3l5,-6 5,6h-3v8z" fill="#4a7fc0"/></svg>
<svg width="16" height="16" style="left:1236px;top:145px" viewBox="0 0 16 16"><rect x="0.5" y="0.5" width="11" height="11" fill="none" stroke="#777"/><rect x="8.5" y="10.5" width="7" height="4" rx="1" fill="#e84848"/><path d="M10,12.5h4" stroke="#fff"/></svg>
<!-- tree -->
<div class="a" style="left:1040px;top:169px;width:240px;height:573px;background:#fff;border:1px solid #a0a0a0;border-right:none"></div>
<div class="a" style="left:1041px;top:206px;width:239px;height:19px;background:#e8e8e8"></div>
<svg width="9" height="5" style="left:1046px;top:177px" viewBox="0 0 9 5"><path d="M0,0h9l-4.5,5z" fill="#555"/></svg>
<svg width="9" height="5" style="left:1066px;top:195px" viewBox="0 0 9 5"><path d="M0,0h9l-4.5,5z" fill="#555"/></svg>
<div class="cb" style="left:1064px;top:172px"></div>
<div class="cb" style="left:1084px;top:190px"></div>
<div class="cb" style="left:1104px;top:208px"></div>
<div class="cb" style="left:1084px;top:226px"></div>
<div class="cb" style="left:1064px;top:244px"></div>
<div class="cb" style="left:1064px;top:262px"></div>
<svg width="240" height="110" style="left:1040px;top:169px" viewBox="0 0 240 110"><g fill="none" stroke="#000" stroke-width="1.9"><path d="M27.5,10.5l2.5,3 5,-7"/><path d="M47.5,28.5l2.5,3 5,-7"/><path d="M67.5,46.5l2.5,3 5,-7"/><path d="M47.5,64.5l2.5,3 5,-7"/><path d="M27.5,82.5l2.5,3 5,-7"/><path d="M27.5,100.5l2.5,3 5,-7"/></g>
<path d="M45.5,10v4.5h5" fill="none" stroke="#666" stroke-width="0.8"/><rect x="47.5" y="4.5" width="8" height="9" fill="#eee" stroke="#666" stroke-width="0.8"/><rect x="49.5" y="2.5" width="8" height="9" fill="#f4f4f4" stroke="#666" stroke-width="0.8"/><path d="M52,10v-7.5a1.3,1.3 0 0 1 2.6,0v6" fill="none" stroke="#3a6aa8" stroke-width="0.9"/><path d="M65.5,28v4.5h5" fill="none" stroke="#666" stroke-width="0.8"/><rect x="67.5" y="22.5" width="8" height="9" fill="#eee" stroke="#666" stroke-width="0.8"/><rect x="69.5" y="20.5" width="8" height="9" fill="#f4f4f4" stroke="#666" stroke-width="0.8"/><path d="M72,28v-7.5a1.3,1.3 0 0 1 2.6,0v6" fill="none" stroke="#3a6aa8" stroke-width="0.9"/>
<rect x="84.5" y="38.5" width="15" height="16" fill="#f8c8c8" stroke="#e86060"/>
<path d="M88,52l1,-4 5,-8 2,1.2 -5,8z" fill="#f0d848" stroke="#a89020" stroke-width="0.6"/>
<rect x="64.5" y="56.5" width="15" height="16" fill="#fff" stroke="#333"/>
<path d="M68,70l1,-4 5,-8 2,1.2 -5,8z" fill="#f0d848" stroke="#a89020" stroke-width="0.6"/>
<rect x="44.5" y="74.5" width="15" height="16" fill="#fcc8ec" stroke="#999"/>
<rect x="44.5" y="92.5" width="15" height="16" fill="#fff" stroke="#333"/>
</svg>
<div class="t" style="left:1105px;top:175px">BGD_KP_UA74100310000091595_01</div>
<div class="t" style="left:1125px;top:193px">Errors</div>
<div class="t u" style="left:1146px;top:210px;font-weight:bold;font-size:12px">agro_soil_err</div>
<div class="t" style="left:1126px;top:228px;font-weight:bold;font-size:12px">agro_soil</div>
<div class="t" style="left:1106px;top:246px;font-weight:bold;font-size:12px">settlement</div>
<div class="t" style="left:1106px;top:264px;font-weight:bold;font-size:12px">hromada</div>
<div id="status" class="a"></div>
<div class="t" style="left:2px;top:752px">Немає поточного проекту</div>
<div class="field" style="left:140px;top:745px;width:255px;height:22px;border-radius:3px"></div>
<svg width="14" height="14" style="left:148px;top:749px" viewBox="0 0 14 14"><circle cx="5.5" cy="5.5" r="4.3" fill="none" stroke="#777" stroke-width="1.2"/><path d="M8.6,8.6L13,13" stroke="#777" stroke-width="1.4"/></svg>
<div class="t" style="left:168px;top:752px;color:#7a7a7a">Ввести, щоб знайти (Ctrl+K)</div>
<div class="t" style="left:402px;top:752px">Intersect with the current selection</div>
<div class="t" style="left:582px;top:752px">Координата</div>
<div class="field" style="left:648px;top:745px;width:128px;height:22px;border-radius:3px"></div>
<div class="t" style="left:655px;top:752px">5 661 712,7&nbsp; 230 159,1</div>
<svg width="18" height="18" style="left:780px;top:747px" viewBox="0 0 18 18"><ellipse cx="8.5" cy="9.5" rx="5" ry="7" transform="rotate(-35 8.5 9.5)" fill="#fff" stroke="#111" stroke-width="1.6"/><path d="M4,5.5c1.5,-1.5 3.5,-1.5 5,0l2,3c-1.5,1.5 -3.5,1.5 -5,0z" fill="#333"/><path d="M5.5,5l3.5,5" stroke="#fff" stroke-width="1"/><circle cx="10" cy="13" r="2" fill="none" stroke="#111" stroke-width="1.3"/><path d="M12,5l2,-2M15,5l2,-1M2,12.5l2,-0.5" stroke="#222" stroke-width="1"/></svg>
<div class="t" style="left:808px;top:752px">Масштаб</div>
<div class="btn" style="left:857px;top:745px;width:87px;height:22px;background:#fff;border-radius:3px"></div>
<div class="a" style="left:923px;top:746px;width:1px;height:20px;background:#d0d0d0"></div>
<svg width="9" height="5" style="left:928px;top:754px" viewBox="0 0 9 5"><path d="M0,0h9l-4.5,5z" fill="#555"/></svg>
<div class="t" style="left:861px;top:752px">1:604</div>
<svg width="12" height="16" style="left:956px;top:749px" viewBox="0 0 12 16"><path d="M2.5,7V5a3.5,3.5 0 0 1 7,0v2" fill="none" stroke="#666" stroke-width="2"/><rect x="0.5" y="7" width="11" height="8.5" rx="1.5" fill="#666"/></svg>
<div class="t" style="left:976px;top:752px">Наближення</div>
<div class="field" style="left:1043px;top:746px;width:84px;height:20px;border-radius:3px"></div>
<div class="a" style="left:1113px;top:747px;width:1px;height:18px;background:#d0d0d0"></div>
<svg width="9" height="12" style="left:1115px;top:750px" viewBox="0 0 9 12"><path d="M0.5,5h8l-4,-4z M0.5,7h8l-4,4z" fill="#555"/></svg>
<div class="t" style="left:1049px;top:752px">100%</div>
<div class="t" style="left:1135px;top:752px">Обертання</div>
<div class="field" style="left:1201px;top:746px;width:84px;height:20px;border-radius:3px"></div>
<div class="a" style="left:1269px;top:747px;width:1px;height:18px;background:#d0d0d0"></div>
<svg width="9" height="12" style="left:1271px;top:750px" viewBox="0 0 9 12"><path d="M0.5,5h8l-4,-4z M0.5,7h8l-4,4z" fill="#555"/></svg>
<div class="t" style="left:1205px;top:752px">0,0 °</div>
<div id="taskbar" class="a">
<svg width="1280" height="30" style="left:0;top:0" viewBox="0 770 1280 30">
<g fill="#fff"><path d="M10,778.5l7,-1v7h-7z M18,777.3l8.5,-1.2v8.4h-8.5z M10,785.5h7v7l-7,-1z M18,785.5h8.5v8.4l-8.5,-1.2z"/></g>
<g fill="none" stroke="#fff" stroke-width="1.3"><rect x="47" y="781" width="11" height="8"/><path d="M46,778h13M46,792h13M61,778v2M61,783v9"/></g>
<path d="M79.5,778v14M81.5,778v14" stroke="#555" stroke-width="1"/>
<rect x="105" y="777" width="16" height="16" rx="2" fill="#d42020" stroke="#fff" stroke-width="0.8"/><path d="M109,789l8,-8M113,781h4v4" stroke="#fff" stroke-width="1.6" fill="none"/>
<path d="M142,778h6l2,2h8v12h-16z" fill="#f0c030"/><rect x="142" y="782" width="16" height="10" fill="#ffd84a"/><rect x="147" y="786" width="6" height="6" fill="#3a7ad8"/>
<rect x="179" y="777" width="13" height="11" fill="#d8e4f0" stroke="#aaa" stroke-width="0.6"/><rect x="180.5" y="778.5" width="10" height="8" fill="#2050c0"/><circle cx="190" cy="790" r="4.5" fill="#e8e8e8"/><path d="M187.5,790h5" stroke="#2a9a30" stroke-width="1.4"/>
<rect x="216" y="777" width="16" height="12" fill="#e0e8f0" stroke="#999" stroke-width="0.6"/><path d="M218,784l3,-3 3,3 3,-2 3,2" stroke="#3a78c8" fill="none"/><rect x="220" y="789" width="8" height="3" fill="#aaa"/><rect x="213" y="783" width="3" height="9" fill="#888"/>
<rect x="254" y="777" width="13" height="12" fill="#e8e8e8" stroke="#666" stroke-width="0.6"/><rect x="256" y="779" width="9" height="6" fill="#1040c0"/><circle cx="255" cy="782" r="3.5" fill="#28c8e8"/><rect x="252" y="789" width="16" height="4" fill="#ddd"/>
<rect x="289" y="777" width="16" height="16" fill="#111"/><path d="M289,793l16,-16" stroke="#ccc" stroke-width="2"/><path d="M291,789l5,-3 4,2 3,-4" stroke="#e02020" stroke-width="2" fill="none"/><path d="M292,784l4,4 5,-6" stroke="#20d020" stroke-width="1.6" fill="none"/>
<ellipse cx="334" cy="784" rx="8" ry="5" transform="rotate(-20 334 784)" fill="#e8e8e8" stroke="#d03030" stroke-width="1.5"/><path d="M334,784l4,8M330,790l6,-4" stroke="#3a90d8" stroke-width="1.5"/>
<circle cx="371" cy="785" r="8" fill="#8a3ab8"/><circle cx="371" cy="785" r="4.5" fill="#fff"/><path d="M368,790v-3h6v3" fill="#8a3ab8"/>
<rect x="400" y="777" width="16" height="16" rx="2" fill="#22b040"/><text x="401.5" y="790" font-size="10" fill="#fff" font-family="Liberation Sans">QC</text>
<rect x="438" y="778" width="13" height="15" fill="#fffde0" stroke="#888" stroke-width="0.6"/><path d="M440,781h9M440,784h9M440,787h9" stroke="#999" stroke-width="0.7"/><path d="M444,790l8,-11" stroke="#e8a020" stroke-width="2.2"/><rect x="438" y="790" width="8" height="3" fill="#6ac048"/>
<rect x="476" y="777" width="11" height="16" fill="#20508a"/><rect x="476" y="777" width="3" height="16" fill="#0a2a50"/><circle cx="486" cy="785" r="1.2" fill="#111"/>
<rect x="511" y="777" width="16" height="16" fill="#2040b0"/><rect x="514" y="777" width="10" height="5" fill="#fff"/><rect x="513" y="785" width="12" height="8" fill="#fff"/><text x="514" y="792" font-size="7" fill="#2040b0" font-family="Liberation Mono">64</text>
<rect x="548" y="778" width="16" height="14" fill="#111" stroke="#ccc" stroke-width="1"/><rect x="548" y="778" width="16" height="3" fill="#ccc"/><text x="550" y="789" font-size="6.5" fill="#fff" font-family="Liberation Mono">C:\_</text>
<circle cx="593" cy="785" r="8" fill="#db4437"/><path d="M593,785 L586,789 A8,8 0 0 0 600.5,788z" fill="#0f9d58"/><path d="M593,777A8,8 0 0 1 600.9,786 L593,785z" fill="#f4c20d"/><circle cx="593" cy="785" r="4" fill="#fff"/><circle cx="593" cy="785" r="3" fill="#4285f4"/>
<text x="622" y="784" font-size="9" font-weight="bold" fill="#f0d020" font-family="Liberation Sans">Xed</text><path d="M623,788h5M630,789h5M624,791h6" stroke="#2a8ae8" stroke-width="1.3"/>
<rect x="659" y="777" width="17" height="16" fill="#3a3a3a"/><path d="M661,781l6,-3 7,4 -2,8 -6,2z M664,786l5,2" stroke="#8ad82a" stroke-width="1.6" fill="none" stroke-dasharray="2 1"/>
<path d="M711,777l3,1.5v13l-3,1.5 -9,-8 -4,3 -1.5,-1v-7l1.5,-1 4,3z M711,781l-5,4 5,4z" fill="#2a8ae0" fill-rule="evenodd"/>
<rect x="724" y="770" width="36" height="30" fill="#3c3c3c"/>
<circle cx="741" cy="784" r="6" fill="none" stroke="#8ab82a" stroke-width="2.8"/><path d="M742,785l5,6" stroke="#7ab03a" stroke-width="2.6" stroke-linecap="round"/><circle cx="742" cy="785" r="1.5" fill="#f08a2a"/>
<circle cx="779" cy="785" r="8" fill="#db4437"/><path d="M779,785 L772,789 A8,8 0 0 0 786.5,788z" fill="#0f9d58"/><path d="M779,777A8,8 0 0 1 786.9,786 L779,785z" fill="#f4c20d"/><circle cx="779" cy="785" r="4" fill="#fff"/><circle cx="779" cy="785" r="3" fill="#4285f4"/><circle cx="784" cy="790" r="3.5" fill="#1a5ab8"/>
<g fill="#6b9bd0"><rect x="136" y="797" width="14" height="3"/><rect x="151" y="797" width="13" height="3"/><rect x="210" y="797" width="28" height="3"/><rect x="691" y="797" width="15" height="3"/><rect x="707" y="797" width="16" height="3"/><rect x="724" y="797" width="36" height="3"/><rect x="761" y="797" width="32" height="3"/></g>
<path d="M920.5,777v14M922.5,777v14" stroke="#555" stroke-width="1"/>
<text x="937" y="788" font-size="11" fill="#fff" font-family="Liberation Sans">EN</text>
<path d="M982,789l5,-5 5,5" stroke="#fff" stroke-width="1.3" fill="none"/>
<rect x="1003" y="777" width="17" height="16" fill="#3a3a3a"/><path d="M1005,781l6,-3 7,4 -2,8 -6,2z" stroke="#8ad82a" stroke-width="1.6" fill="none" stroke-dasharray="2 1"/>
<rect x="1030" y="779" width="12" height="13" fill="#555" stroke="#ccc" stroke-width="0.8"/>
<path d="M1054,782h3l4,-4v14l-4,-4h-3z" fill="none" stroke="#fff" stroke-width="1.1"/><path d="M1063,781c2,2 2,6 0,8M1065.5,779c3,3 3,9 0,12" stroke="#fff" fill="none" stroke-width="1"/>
<path d="M1077,793a11,11 0 0 1 11,-11M1080,793a8,8 0 0 1 8,-8M1083,793a5,5 0 0 1 5,-5" stroke="#fff" fill="none" stroke-width="1.3"/><circle cx="1090" cy="792" r="1.5" fill="#fff"/>
<rect x="1105" y="781" width="12" height="8" fill="none" stroke="#fff" stroke-width="1.2"/><rect x="1117" y="783" width="1.5" height="4" fill="#fff"/><path d="M1099,784h6M1101,781v3M1103,781v3" stroke="#fff" stroke-width="1.1"/>
<rect x="1125" y="779" width="22" height="12" rx="1" fill="none" stroke="#fff" stroke-width="1.2"/><path d="M1128,782.5h16M1128,785h16M1131,788h10" stroke="#fff" stroke-width="1" stroke-dasharray="1 1"/>
<text x="1157" y="789" font-size="10" fill="#2a2a2a" font-family="Liberation Sans">ENG</text>
<text x="1200" y="789" font-size="10" fill="#2a2a2a" font-family="Liberation Sans">9:11</text>
<path d="M1238,777.5h18v12h-6l-3,3 -3,-3h-6z" fill="none" stroke="#fff" stroke-width="1.2"/>
</svg>
</div>
<div class="a" style="left:1040px;top:740px;width:240px;height:1px;background:#fff"></div><div class="a" style="left:1040px;top:741px;width:240px;height:1px;background:#a8a8a8"></div>
<svg width="20" height="20" style="left:1030px;top:420px" viewBox="1030 420 20 20"><g fill="#a8a8a8"><rect x="1037" y="424" width="1" height="1"/><rect x="1037" y="427" width="1" height="1"/><rect x="1037" y="430" width="1" height="1"/><rect x="1037" y="433" width="1" height="1"/><rect x="1037" y="436" width="1" height="1"/><rect x="1037" y="439" width="1" height="1"/></g></svg>
<!-- activate windows -->
<div class="t" style="left:991px;top:692px;font-size:19.6px;color:rgba(120,120,120,0.42)">Activate Windows</div>
<div class="t" style="left:991px;top:716px;font-size:15px;color:rgba(120,120,120,0.42)">Go to Settings to activate Windows.</div>
</body></html>
